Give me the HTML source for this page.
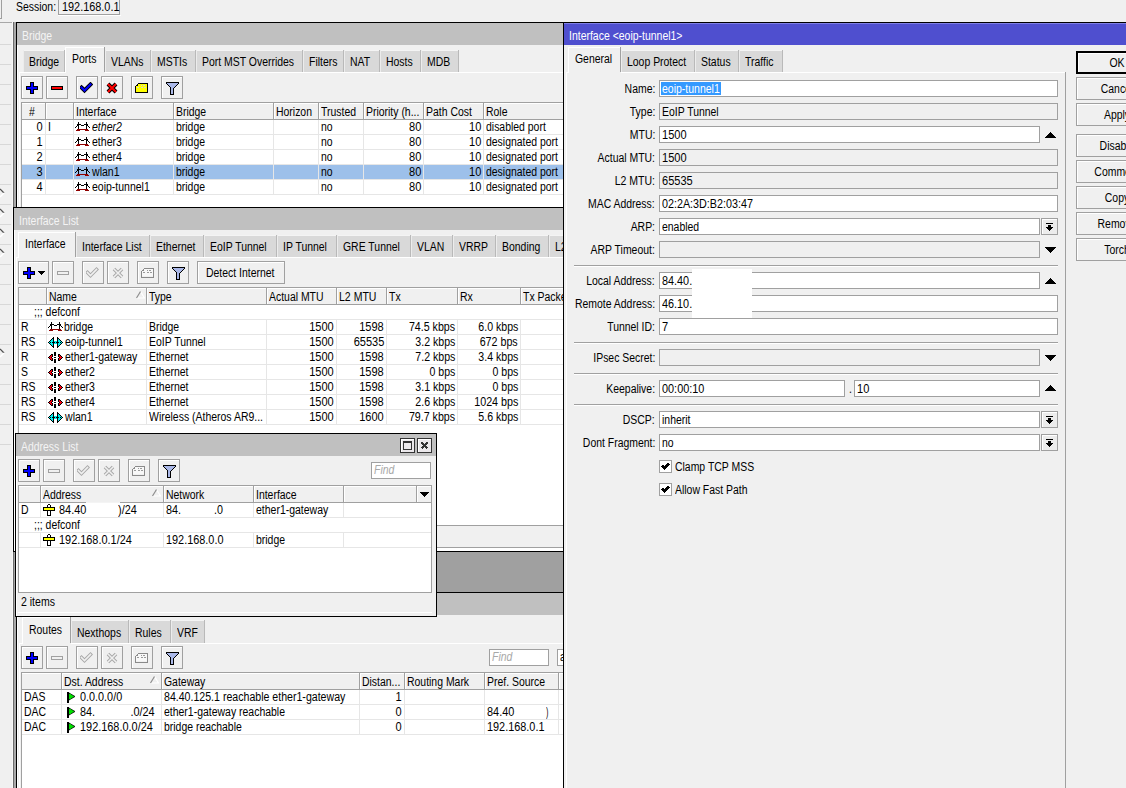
<!DOCTYPE html>
<html><head><meta charset="utf-8"><title>Winbox</title>
<style>
html,body{margin:0;padding:0;width:1126px;height:788px;overflow:hidden;background:#f0f0f0;position:relative}
.a{position:absolute;display:block}
.t{position:absolute;white-space:pre;font-family:"Liberation Sans",sans-serif;font-size:12px;line-height:14px;color:#000;transform-origin:0 0}
</style></head><body>
<div class="a" style="left:-5px;top:-5px;width:7px;height:24px;background:#f0f0f0;border:1px solid #a0a0a0;box-sizing:border-box;"></div>
<div class="t" style="top:0px;color:#000;transform:scaleX(0.87);left:16px;">Session:</div>
<div class="a" style="left:58px;top:-3px;width:62px;height:18px;background:#f0f0f0;border:1px solid #a0a0a0;box-sizing:border-box;"></div>
<div class="a" style="left:58px;top:15px;width:63px;height:1px;background:#ffffff;"></div>
<div class="t" style="top:0px;color:#000;transform:scaleX(0.9063636363636364);left:62px;">192.168.0.1</div>
<div class="a" style="left:0px;top:44px;width:11px;height:1px;background:#d8d8d8;"></div>
<div class="a" style="left:0px;top:64px;width:11px;height:1px;background:#d8d8d8;"></div>
<div class="a" style="left:0px;top:84px;width:11px;height:1px;background:#d8d8d8;"></div>
<div class="a" style="left:0px;top:104px;width:11px;height:1px;background:#d8d8d8;"></div>
<div class="a" style="left:0px;top:124px;width:11px;height:1px;background:#d8d8d8;"></div>
<div class="a" style="left:0px;top:144px;width:11px;height:1px;background:#d8d8d8;"></div>
<div class="a" style="left:0px;top:164px;width:11px;height:1px;background:#d8d8d8;"></div>
<div class="a" style="left:0px;top:184px;width:11px;height:1px;background:#d8d8d8;"></div>
<div class="a" style="left:0px;top:204px;width:11px;height:1px;background:#d8d8d8;"></div>
<div class="a" style="left:0px;top:224px;width:11px;height:1px;background:#d8d8d8;"></div>
<div class="a" style="left:0px;top:244px;width:11px;height:1px;background:#d8d8d8;"></div>
<div class="a" style="left:0px;top:264px;width:11px;height:1px;background:#d8d8d8;"></div>
<div class="a" style="left:0px;top:284px;width:11px;height:1px;background:#d8d8d8;"></div>
<div class="a" style="left:0px;top:304px;width:11px;height:1px;background:#d8d8d8;"></div>
<div class="a" style="left:0px;top:324px;width:11px;height:1px;background:#d8d8d8;"></div>
<div class="a" style="left:0px;top:344px;width:11px;height:1px;background:#d8d8d8;"></div>
<div class="a" style="left:0px;top:364px;width:11px;height:1px;background:#d8d8d8;"></div>
<div class="a" style="left:0px;top:384px;width:11px;height:1px;background:#d8d8d8;"></div>
<div class="a" style="left:0px;top:404px;width:11px;height:1px;background:#d8d8d8;"></div>
<div class="a" style="left:0px;top:424px;width:11px;height:1px;background:#d8d8d8;"></div>
<div class="a" style="left:0px;top:444px;width:11px;height:1px;background:#d8d8d8;"></div>
<div class="a" style="left:0px;top:22px;width:13px;height:1px;background:#a8a8a8;"></div>
<svg class="a" style="left:0px;top:188px" width="6" height="11" viewBox="0 0 6 11" shape-rendering="crispEdges"><path d="M0 1 L4 5" stroke="#505050" stroke-width="1.2" fill="none" shape-rendering="auto"/><path d="M4 5 L0 9" stroke="#ffffff" stroke-width="1.5" fill="none" shape-rendering="auto"/></svg>
<svg class="a" style="left:0px;top:208px" width="6" height="11" viewBox="0 0 6 11" shape-rendering="crispEdges"><path d="M0 1 L4 5" stroke="#505050" stroke-width="1.2" fill="none" shape-rendering="auto"/><path d="M4 5 L0 9" stroke="#ffffff" stroke-width="1.5" fill="none" shape-rendering="auto"/></svg>
<svg class="a" style="left:0px;top:228px" width="6" height="11" viewBox="0 0 6 11" shape-rendering="crispEdges"><path d="M0 1 L4 5" stroke="#505050" stroke-width="1.2" fill="none" shape-rendering="auto"/><path d="M4 5 L0 9" stroke="#ffffff" stroke-width="1.5" fill="none" shape-rendering="auto"/></svg>
<svg class="a" style="left:0px;top:248px" width="6" height="11" viewBox="0 0 6 11" shape-rendering="crispEdges"><path d="M0 1 L4 5" stroke="#505050" stroke-width="1.2" fill="none" shape-rendering="auto"/><path d="M4 5 L0 9" stroke="#ffffff" stroke-width="1.5" fill="none" shape-rendering="auto"/></svg>
<svg class="a" style="left:0px;top:348px" width="6" height="11" viewBox="0 0 6 11" shape-rendering="crispEdges"><path d="M0 1 L4 5" stroke="#505050" stroke-width="1.2" fill="none" shape-rendering="auto"/><path d="M4 5 L0 9" stroke="#ffffff" stroke-width="1.5" fill="none" shape-rendering="auto"/></svg>
<div class="a" style="left:13px;top:22px;width:1113px;height:766px;background:#a0a0a0;"></div>
<div class="a" style="left:12px;top:22px;width:1px;height:766px;background:#f8f8f8;"></div>
<div class="a" style="left:13px;top:22px;width:1px;height:766px;background:#6d6d6d;"></div>
<div class="a" style="left:14px;top:22px;width:2px;height:766px;background:#a9a9a9;"></div>
<div class="a" style="left:16px;top:22px;width:685px;height:186px;background:#f0f0f0;"></div>
<div class="a" style="left:16px;top:22px;width:685px;height:186px;border:1px solid #000000;box-sizing:border-box;"></div>
<div class="a" style="left:17px;top:23px;width:1px;height:184px;background:#ffffff;"></div>
<div class="a" style="left:17px;top:23px;width:684px;height:22px;background:#c0c0c0;"></div>
<div class="t" style="top:29px;color:#f4f4f4;transform:scaleX(0.87);left:22px;">Bridge</div>
<div class="a" style="left:19px;top:72px;width:545px;height:1px;background:#ffffff;"></div>
<div class="a" style="left:19px;top:72px;width:1px;height:135px;background:#ffffff;"></div>
<div class="a" style="left:23px;top:50px;width:42px;height:22px;background:#d9d9d9;"></div>
<div class="a" style="left:23px;top:50px;width:42px;height:1px;background:#f4f4f4;"></div>
<div class="a" style="left:23px;top:50px;width:1px;height:22px;background:#ececec;"></div>
<div class="a" style="left:64px;top:50px;width:1px;height:22px;background:#b9b9b9;"></div>
<div class="t" style="top:55px;color:#000;transform:scaleX(0.87);left:29px;">Bridge</div>
<div class="a" style="left:105px;top:50px;width:46px;height:22px;background:#d9d9d9;"></div>
<div class="a" style="left:105px;top:50px;width:46px;height:1px;background:#f4f4f4;"></div>
<div class="a" style="left:105px;top:50px;width:1px;height:22px;background:#ececec;"></div>
<div class="a" style="left:150px;top:50px;width:1px;height:22px;background:#b9b9b9;"></div>
<div class="t" style="top:55px;color:#000;transform:scaleX(0.87);left:111px;">VLANs</div>
<div class="a" style="left:151px;top:50px;width:45px;height:22px;background:#d9d9d9;"></div>
<div class="a" style="left:151px;top:50px;width:45px;height:1px;background:#f4f4f4;"></div>
<div class="a" style="left:151px;top:50px;width:1px;height:22px;background:#ececec;"></div>
<div class="a" style="left:195px;top:50px;width:1px;height:22px;background:#b9b9b9;"></div>
<div class="t" style="top:55px;color:#000;transform:scaleX(0.87);left:157px;">MSTIs</div>
<div class="a" style="left:196px;top:50px;width:107px;height:22px;background:#d9d9d9;"></div>
<div class="a" style="left:196px;top:50px;width:107px;height:1px;background:#f4f4f4;"></div>
<div class="a" style="left:196px;top:50px;width:1px;height:22px;background:#ececec;"></div>
<div class="a" style="left:302px;top:50px;width:1px;height:22px;background:#b9b9b9;"></div>
<div class="t" style="top:55px;color:#000;transform:scaleX(0.87);left:202px;">Port MST Overrides</div>
<div class="a" style="left:303px;top:50px;width:41px;height:22px;background:#d9d9d9;"></div>
<div class="a" style="left:303px;top:50px;width:41px;height:1px;background:#f4f4f4;"></div>
<div class="a" style="left:303px;top:50px;width:1px;height:22px;background:#ececec;"></div>
<div class="a" style="left:343px;top:50px;width:1px;height:22px;background:#b9b9b9;"></div>
<div class="t" style="top:55px;color:#000;transform:scaleX(0.87);left:309px;">Filters</div>
<div class="a" style="left:344px;top:50px;width:36px;height:22px;background:#d9d9d9;"></div>
<div class="a" style="left:344px;top:50px;width:36px;height:1px;background:#f4f4f4;"></div>
<div class="a" style="left:344px;top:50px;width:1px;height:22px;background:#ececec;"></div>
<div class="a" style="left:379px;top:50px;width:1px;height:22px;background:#b9b9b9;"></div>
<div class="t" style="top:55px;color:#000;transform:scaleX(0.87);left:350px;">NAT</div>
<div class="a" style="left:380px;top:50px;width:41px;height:22px;background:#d9d9d9;"></div>
<div class="a" style="left:380px;top:50px;width:41px;height:1px;background:#f4f4f4;"></div>
<div class="a" style="left:380px;top:50px;width:1px;height:22px;background:#ececec;"></div>
<div class="a" style="left:420px;top:50px;width:1px;height:22px;background:#b9b9b9;"></div>
<div class="t" style="top:55px;color:#000;transform:scaleX(0.87);left:386px;">Hosts</div>
<div class="a" style="left:421px;top:50px;width:38px;height:22px;background:#d9d9d9;"></div>
<div class="a" style="left:421px;top:50px;width:38px;height:1px;background:#f4f4f4;"></div>
<div class="a" style="left:421px;top:50px;width:1px;height:22px;background:#ececec;"></div>
<div class="a" style="left:458px;top:50px;width:1px;height:22px;background:#b9b9b9;"></div>
<div class="t" style="top:55px;color:#000;transform:scaleX(0.87);left:427px;">MDB</div>
<div class="a" style="left:65px;top:47px;width:40px;height:26px;background:#f0f0f0;"></div>
<div class="a" style="left:65px;top:47px;width:40px;height:1px;background:#ffffff;"></div>
<div class="a" style="left:65px;top:47px;width:1px;height:26px;background:#ffffff;"></div>
<div class="a" style="left:104px;top:47px;width:1px;height:25px;background:#a0a0a0;"></div>
<div class="t" style="top:52px;color:#000;transform:scaleX(0.87);left:72px;">Ports</div>
<div class="a" style="left:21px;top:76px;width:22px;height:23px;background:#f0f0f0;border:1px solid #a0a0a0;box-sizing:border-box;"></div>
<div class="a" style="left:22px;top:77px;width:20px;height:1px;background:#ffffff;"></div>
<div class="a" style="left:22px;top:77px;width:1px;height:21px;background:#ffffff;"></div>
<svg class="a" style="left:26px;top:82px" width="12" height="12" viewBox="0 0 12 12" shape-rendering="crispEdges"><rect x="4" y="0" width="4" height="12" fill="#000"/><rect x="0" y="4" width="12" height="4" fill="#000"/><rect x="5" y="1" width="2" height="10" fill="#0000ff"/><rect x="1" y="5" width="10" height="2" fill="#0000ff"/></svg>
<div class="a" style="left:46px;top:76px;width:22px;height:23px;background:#f0f0f0;border:1px solid #a0a0a0;box-sizing:border-box;"></div>
<div class="a" style="left:47px;top:77px;width:20px;height:1px;background:#ffffff;"></div>
<div class="a" style="left:47px;top:77px;width:1px;height:21px;background:#ffffff;"></div>
<svg class="a" style="left:51px;top:86px" width="12" height="4" viewBox="0 0 12 4" shape-rendering="crispEdges"><rect x="0" y="0" width="12" height="4" fill="#000"/><rect x="1" y="1" width="10" height="2" fill="#ff0000"/></svg>
<div class="a" style="left:76px;top:76px;width:22px;height:23px;background:#f0f0f0;border:1px solid #a0a0a0;box-sizing:border-box;"></div>
<div class="a" style="left:77px;top:77px;width:20px;height:1px;background:#ffffff;"></div>
<div class="a" style="left:77px;top:77px;width:1px;height:21px;background:#ffffff;"></div>
<svg class="a" style="left:80px;top:82px" width="13" height="12" viewBox="0 0 13 12"><path d="M1.5 5.5 L4.5 8.5 L10.5 2.5" stroke="#000" stroke-width="4" fill="none" stroke-linecap="square"/><path d="M1.5 5.5 L4.5 8.5 L10.5 2.5" stroke="#0000ff" stroke-width="2" fill="none" stroke-linecap="square"/></svg>
<div class="a" style="left:101px;top:76px;width:22px;height:23px;background:#f0f0f0;border:1px solid #a0a0a0;box-sizing:border-box;"></div>
<div class="a" style="left:102px;top:77px;width:20px;height:1px;background:#ffffff;"></div>
<div class="a" style="left:102px;top:77px;width:1px;height:21px;background:#ffffff;"></div>
<svg class="a" style="left:106px;top:82px" width="12" height="12" viewBox="0 0 12 12"><path d="M2 2 L10 10 M10 2 L2 10" stroke="#000" stroke-width="4" fill="none"/><path d="M2 2 L10 10 M10 2 L2 10" stroke="#ff0000" stroke-width="2" fill="none"/></svg>
<div class="a" style="left:131px;top:76px;width:22px;height:23px;background:#f0f0f0;border:1px solid #a0a0a0;box-sizing:border-box;"></div>
<div class="a" style="left:132px;top:77px;width:20px;height:1px;background:#ffffff;"></div>
<div class="a" style="left:132px;top:77px;width:1px;height:21px;background:#ffffff;"></div>
<svg class="a" style="left:135px;top:83px" width="13" height="10" viewBox="0 0 13 10" shape-rendering="crispEdges"><rect x="3" y="1" width="9" height="1" fill="#ffff00"/><rect x="2" y="2" width="10" height="1" fill="#ffff00"/><rect x="1" y="3" width="11" height="1" fill="#ffff00"/><rect x="1" y="4" width="11" height="1" fill="#ffff00"/><rect x="1" y="5" width="11" height="1" fill="#ffff00"/><rect x="1" y="6" width="11" height="1" fill="#ffff00"/><rect x="1" y="7" width="11" height="1" fill="#ffff00"/><rect x="1" y="8" width="11" height="1" fill="#ffff00"/><rect x="6" y="2" width="1" height="1" fill="#d8d8c8"/><rect x="8" y="2" width="2" height="1" fill="#d8d8c8"/><rect x="2" y="4" width="2" height="1" fill="#d8d8c8"/><rect x="6" y="4" width="2" height="1" fill="#d8d8c8"/><rect x="9" y="4" width="2" height="1" fill="#d8d8c8"/><rect x="3" y="0" width="10" height="1" fill="#000"/><rect x="2" y="1" width="1" height="1" fill="#000"/><rect x="12" y="1" width="1" height="1" fill="#000"/><rect x="1" y="2" width="1" height="1" fill="#000"/><rect x="12" y="2" width="1" height="1" fill="#000"/><rect x="0" y="3" width="1" height="1" fill="#000"/><rect x="12" y="3" width="1" height="1" fill="#000"/><rect x="0" y="4" width="1" height="1" fill="#000"/><rect x="12" y="4" width="1" height="1" fill="#000"/><rect x="0" y="5" width="1" height="1" fill="#000"/><rect x="12" y="5" width="1" height="1" fill="#000"/><rect x="0" y="6" width="1" height="1" fill="#000"/><rect x="12" y="6" width="1" height="1" fill="#000"/><rect x="0" y="7" width="1" height="1" fill="#000"/><rect x="12" y="7" width="1" height="1" fill="#000"/><rect x="0" y="8" width="1" height="1" fill="#000"/><rect x="12" y="8" width="1" height="1" fill="#000"/><rect x="0" y="9" width="13" height="1" fill="#000"/><rect x="2" y="2" width="1" height="1" fill="#000"/></svg>
<div class="a" style="left:161px;top:76px;width:22px;height:23px;background:#f0f0f0;border:1px solid #a0a0a0;box-sizing:border-box;"></div>
<div class="a" style="left:162px;top:77px;width:20px;height:1px;background:#ffffff;"></div>
<div class="a" style="left:162px;top:77px;width:1px;height:21px;background:#ffffff;"></div>
<svg class="a" style="left:166px;top:82px" width="13" height="13" viewBox="0 0 13 13" shape-rendering="crispEdges"><rect x="1" y="1" width="11" height="1" fill="#aab8e8"/><rect x="2" y="2" width="9" height="1" fill="#aab8e8"/><rect x="3" y="3" width="7" height="1" fill="#aab8e8"/><rect x="4" y="4" width="5" height="1" fill="#aab8e8"/><rect x="5" y="5" width="3" height="1" fill="#aab8e8"/><rect x="5" y="6" width="2" height="1" fill="#aab8e8"/><rect x="5" y="7" width="2" height="1" fill="#aab8e8"/><rect x="5" y="8" width="2" height="1" fill="#aab8e8"/><rect x="5" y="9" width="2" height="1" fill="#aab8e8"/><rect x="5" y="10" width="2" height="1" fill="#aab8e8"/><rect x="5" y="11" width="2" height="1" fill="#aab8e8"/><rect x="0" y="0" width="13" height="1" fill="#000"/><rect x="0" y="1" width="1" height="1" fill="#000"/><rect x="12" y="1" width="1" height="1" fill="#000"/><rect x="1" y="2" width="1" height="1" fill="#000"/><rect x="11" y="2" width="1" height="1" fill="#000"/><rect x="2" y="3" width="1" height="1" fill="#000"/><rect x="10" y="3" width="1" height="1" fill="#000"/><rect x="3" y="4" width="1" height="1" fill="#000"/><rect x="9" y="4" width="1" height="1" fill="#000"/><rect x="4" y="5" width="1" height="1" fill="#000"/><rect x="8" y="5" width="1" height="1" fill="#000"/><rect x="4" y="6" width="1" height="1" fill="#000"/><rect x="7" y="6" width="1" height="1" fill="#000"/><rect x="4" y="7" width="1" height="1" fill="#000"/><rect x="7" y="7" width="1" height="1" fill="#000"/><rect x="4" y="8" width="1" height="1" fill="#000"/><rect x="7" y="8" width="1" height="1" fill="#000"/><rect x="4" y="9" width="1" height="1" fill="#000"/><rect x="7" y="9" width="1" height="1" fill="#000"/><rect x="4" y="10" width="1" height="1" fill="#000"/><rect x="7" y="10" width="1" height="1" fill="#000"/><rect x="4" y="11" width="1" height="1" fill="#000"/><rect x="7" y="11" width="1" height="1" fill="#000"/><rect x="4" y="12" width="4" height="1" fill="#000"/></svg>
<div class="a" style="left:21px;top:102px;width:680px;height:129px;background:#ffffff;"></div>
<div class="a" style="left:21px;top:102px;width:680px;height:129px;border:1px solid #a0a0a0;box-sizing:border-box;"></div>
<div class="a" style="left:22px;top:103px;width:678px;height:16px;background:#f0f0f0;"></div>
<div class="a" style="left:22px;top:103px;width:678px;height:1px;background:#ffffff;"></div>
<div class="a" style="left:22px;top:119px;width:678px;height:1px;background:#a0a0a0;"></div>
<div class="a" style="left:45px;top:103px;width:1px;height:16px;background:#a0a0a0;"></div>
<div class="a" style="left:46px;top:103px;width:1px;height:16px;background:#ffffff;"></div>
<div class="a" style="left:73px;top:103px;width:1px;height:16px;background:#a0a0a0;"></div>
<div class="a" style="left:74px;top:103px;width:1px;height:16px;background:#ffffff;"></div>
<div class="a" style="left:173px;top:103px;width:1px;height:16px;background:#a0a0a0;"></div>
<div class="a" style="left:174px;top:103px;width:1px;height:16px;background:#ffffff;"></div>
<div class="a" style="left:273px;top:103px;width:1px;height:16px;background:#a0a0a0;"></div>
<div class="a" style="left:274px;top:103px;width:1px;height:16px;background:#ffffff;"></div>
<div class="a" style="left:318px;top:103px;width:1px;height:16px;background:#a0a0a0;"></div>
<div class="a" style="left:319px;top:103px;width:1px;height:16px;background:#ffffff;"></div>
<div class="a" style="left:363px;top:103px;width:1px;height:16px;background:#a0a0a0;"></div>
<div class="a" style="left:364px;top:103px;width:1px;height:16px;background:#ffffff;"></div>
<div class="a" style="left:423px;top:103px;width:1px;height:16px;background:#a0a0a0;"></div>
<div class="a" style="left:424px;top:103px;width:1px;height:16px;background:#ffffff;"></div>
<div class="a" style="left:483px;top:103px;width:1px;height:16px;background:#a0a0a0;"></div>
<div class="a" style="left:484px;top:103px;width:1px;height:16px;background:#ffffff;"></div>
<div class="t" style="top:105px;color:#000;transform:scaleX(0.87);left:29px;">#</div>
<div class="t" style="top:105px;color:#000;transform:scaleX(0.87);left:76px;">Interface</div>
<div class="t" style="top:105px;color:#000;transform:scaleX(0.87);left:176px;">Bridge</div>
<div class="t" style="top:105px;color:#000;transform:scaleX(0.87);left:276px;">Horizon</div>
<div class="t" style="top:105px;color:#000;transform:scaleX(0.87);left:321px;">Trusted</div>
<div class="t" style="top:105px;color:#000;transform:scaleX(0.87);left:366px;">Priority (h...</div>
<div class="t" style="top:105px;color:#000;transform:scaleX(0.87);left:426px;">Path Cost</div>
<div class="t" style="top:105px;color:#000;transform:scaleX(0.87);left:486px;">Role</div>
<div class="a" style="left:22px;top:165px;width:600px;height:14px;background:#9dc0ea;"></div>
<div class="a" style="left:22px;top:134px;width:679px;height:1px;background:#e6e6e6;"></div>
<div class="a" style="left:22px;top:149px;width:679px;height:1px;background:#e6e6e6;"></div>
<div class="a" style="left:22px;top:164px;width:679px;height:1px;background:#e6e6e6;"></div>
<div class="a" style="left:22px;top:179px;width:679px;height:1px;background:#e6e6e6;"></div>
<div class="a" style="left:22px;top:194px;width:679px;height:1px;background:#e6e6e6;"></div>
<div class="a" style="left:45px;top:120px;width:1px;height:75px;background:#e6e6e6;"></div>
<div class="a" style="left:73px;top:120px;width:1px;height:75px;background:#e6e6e6;"></div>
<div class="a" style="left:173px;top:120px;width:1px;height:75px;background:#e6e6e6;"></div>
<div class="a" style="left:273px;top:120px;width:1px;height:75px;background:#e6e6e6;"></div>
<div class="a" style="left:318px;top:120px;width:1px;height:75px;background:#e6e6e6;"></div>
<div class="a" style="left:363px;top:120px;width:1px;height:75px;background:#e6e6e6;"></div>
<div class="a" style="left:423px;top:120px;width:1px;height:75px;background:#e6e6e6;"></div>
<div class="a" style="left:483px;top:120px;width:1px;height:75px;background:#e6e6e6;"></div>
<div class="t" style="top:120px;color:#000;transform:scaleX(0.92);right:1083px;transform-origin:100% 0;">0</div>
<div class="t" style="top:120px;color:#000;transform:scaleX(0.87);left:48px;">I</div>
<svg class="a" style="left:75px;top:122px" width="15" height="9" viewBox="0 0 15 9" shape-rendering="crispEdges"><rect x="3" y="0" width="1" height="1" fill="#000"/><rect x="11" y="0" width="1" height="1" fill="#000"/><rect x="3" y="1" width="1" height="1" fill="#000"/><rect x="11" y="1" width="1" height="1" fill="#000"/><rect x="2" y="2" width="4" height="1" fill="#000"/><rect x="9" y="2" width="4" height="1" fill="#000"/><rect x="2" y="3" width="2" height="1" fill="#000"/><rect x="6" y="3" width="3" height="1" fill="#000"/><rect x="11" y="3" width="2" height="1" fill="#000"/><rect x="1" y="4" width="1" height="1" fill="#000"/><rect x="3" y="4" width="1" height="1" fill="#000"/><rect x="11" y="4" width="1" height="1" fill="#000"/><rect x="13" y="4" width="1" height="1" fill="#000"/><rect x="0" y="5" width="1" height="1" fill="#000"/><rect x="3" y="5" width="1" height="1" fill="#000"/><rect x="11" y="5" width="1" height="1" fill="#000"/><rect x="14" y="5" width="1" height="1" fill="#000"/><rect x="3" y="6" width="1" height="1" fill="#000"/><rect x="11" y="6" width="1" height="1" fill="#000"/><rect x="2" y="7" width="11" height="1" fill="#900000"/><rect x="1" y="8" width="4" height="1" fill="#900000"/><rect x="10" y="8" width="4" height="1" fill="#900000"/></svg>
<div class="t" style="top:120px;color:#000;transform:scaleX(0.8783333333333333);left:92px;font-style:italic">ether2</div>
<div class="t" style="top:120px;color:#000;transform:scaleX(0.87);left:176px;">bridge</div>
<div class="t" style="top:120px;color:#000;transform:scaleX(0.87);left:321px;">no</div>
<div class="t" style="top:120px;color:#000;transform:scaleX(0.92);right:705px;transform-origin:100% 0;">80</div>
<div class="t" style="top:120px;color:#000;transform:scaleX(0.92);right:645px;transform-origin:100% 0;">10</div>
<div class="t" style="top:120px;color:#000;transform:scaleX(0.87);left:486px;">disabled port</div>
<div class="t" style="top:135px;color:#000;transform:scaleX(0.92);right:1083px;transform-origin:100% 0;">1</div>
<svg class="a" style="left:75px;top:137px" width="15" height="9" viewBox="0 0 15 9" shape-rendering="crispEdges"><rect x="3" y="0" width="1" height="1" fill="#000"/><rect x="11" y="0" width="1" height="1" fill="#000"/><rect x="3" y="1" width="1" height="1" fill="#000"/><rect x="11" y="1" width="1" height="1" fill="#000"/><rect x="2" y="2" width="4" height="1" fill="#000"/><rect x="9" y="2" width="4" height="1" fill="#000"/><rect x="2" y="3" width="2" height="1" fill="#000"/><rect x="6" y="3" width="3" height="1" fill="#000"/><rect x="11" y="3" width="2" height="1" fill="#000"/><rect x="1" y="4" width="1" height="1" fill="#000"/><rect x="3" y="4" width="1" height="1" fill="#000"/><rect x="11" y="4" width="1" height="1" fill="#000"/><rect x="13" y="4" width="1" height="1" fill="#000"/><rect x="0" y="5" width="1" height="1" fill="#000"/><rect x="3" y="5" width="1" height="1" fill="#000"/><rect x="11" y="5" width="1" height="1" fill="#000"/><rect x="14" y="5" width="1" height="1" fill="#000"/><rect x="3" y="6" width="1" height="1" fill="#000"/><rect x="11" y="6" width="1" height="1" fill="#000"/><rect x="2" y="7" width="11" height="1" fill="#900000"/><rect x="1" y="8" width="4" height="1" fill="#900000"/><rect x="10" y="8" width="4" height="1" fill="#900000"/></svg>
<div class="t" style="top:135px;color:#000;transform:scaleX(0.8783333333333333);left:92px;">ether3</div>
<div class="t" style="top:135px;color:#000;transform:scaleX(0.87);left:176px;">bridge</div>
<div class="t" style="top:135px;color:#000;transform:scaleX(0.87);left:321px;">no</div>
<div class="t" style="top:135px;color:#000;transform:scaleX(0.92);right:705px;transform-origin:100% 0;">80</div>
<div class="t" style="top:135px;color:#000;transform:scaleX(0.92);right:645px;transform-origin:100% 0;">10</div>
<div class="t" style="top:135px;color:#000;transform:scaleX(0.87);left:486px;">designated port</div>
<div class="t" style="top:150px;color:#000;transform:scaleX(0.92);right:1083px;transform-origin:100% 0;">2</div>
<svg class="a" style="left:75px;top:152px" width="15" height="9" viewBox="0 0 15 9" shape-rendering="crispEdges"><rect x="3" y="0" width="1" height="1" fill="#000"/><rect x="11" y="0" width="1" height="1" fill="#000"/><rect x="3" y="1" width="1" height="1" fill="#000"/><rect x="11" y="1" width="1" height="1" fill="#000"/><rect x="2" y="2" width="4" height="1" fill="#000"/><rect x="9" y="2" width="4" height="1" fill="#000"/><rect x="2" y="3" width="2" height="1" fill="#000"/><rect x="6" y="3" width="3" height="1" fill="#000"/><rect x="11" y="3" width="2" height="1" fill="#000"/><rect x="1" y="4" width="1" height="1" fill="#000"/><rect x="3" y="4" width="1" height="1" fill="#000"/><rect x="11" y="4" width="1" height="1" fill="#000"/><rect x="13" y="4" width="1" height="1" fill="#000"/><rect x="0" y="5" width="1" height="1" fill="#000"/><rect x="3" y="5" width="1" height="1" fill="#000"/><rect x="11" y="5" width="1" height="1" fill="#000"/><rect x="14" y="5" width="1" height="1" fill="#000"/><rect x="3" y="6" width="1" height="1" fill="#000"/><rect x="11" y="6" width="1" height="1" fill="#000"/><rect x="2" y="7" width="11" height="1" fill="#900000"/><rect x="1" y="8" width="4" height="1" fill="#900000"/><rect x="10" y="8" width="4" height="1" fill="#900000"/></svg>
<div class="t" style="top:150px;color:#000;transform:scaleX(0.8783333333333333);left:92px;">ether4</div>
<div class="t" style="top:150px;color:#000;transform:scaleX(0.87);left:176px;">bridge</div>
<div class="t" style="top:150px;color:#000;transform:scaleX(0.87);left:321px;">no</div>
<div class="t" style="top:150px;color:#000;transform:scaleX(0.92);right:705px;transform-origin:100% 0;">80</div>
<div class="t" style="top:150px;color:#000;transform:scaleX(0.92);right:645px;transform-origin:100% 0;">10</div>
<div class="t" style="top:150px;color:#000;transform:scaleX(0.87);left:486px;">designated port</div>
<div class="t" style="top:165px;color:#000;transform:scaleX(0.92);right:1083px;transform-origin:100% 0;">3</div>
<svg class="a" style="left:75px;top:167px" width="15" height="9" viewBox="0 0 15 9" shape-rendering="crispEdges"><rect x="3" y="0" width="1" height="1" fill="#000"/><rect x="11" y="0" width="1" height="1" fill="#000"/><rect x="3" y="1" width="1" height="1" fill="#000"/><rect x="11" y="1" width="1" height="1" fill="#000"/><rect x="2" y="2" width="4" height="1" fill="#000"/><rect x="9" y="2" width="4" height="1" fill="#000"/><rect x="2" y="3" width="2" height="1" fill="#000"/><rect x="6" y="3" width="3" height="1" fill="#000"/><rect x="11" y="3" width="2" height="1" fill="#000"/><rect x="1" y="4" width="1" height="1" fill="#000"/><rect x="3" y="4" width="1" height="1" fill="#000"/><rect x="11" y="4" width="1" height="1" fill="#000"/><rect x="13" y="4" width="1" height="1" fill="#000"/><rect x="0" y="5" width="1" height="1" fill="#000"/><rect x="3" y="5" width="1" height="1" fill="#000"/><rect x="11" y="5" width="1" height="1" fill="#000"/><rect x="14" y="5" width="1" height="1" fill="#000"/><rect x="3" y="6" width="1" height="1" fill="#000"/><rect x="11" y="6" width="1" height="1" fill="#000"/><rect x="2" y="7" width="11" height="1" fill="#900000"/><rect x="1" y="8" width="4" height="1" fill="#900000"/><rect x="10" y="8" width="4" height="1" fill="#900000"/></svg>
<div class="t" style="top:165px;color:#000;transform:scaleX(0.88);left:92px;">wlan1</div>
<div class="t" style="top:165px;color:#000;transform:scaleX(0.87);left:176px;">bridge</div>
<div class="t" style="top:165px;color:#000;transform:scaleX(0.87);left:321px;">no</div>
<div class="t" style="top:165px;color:#000;transform:scaleX(0.92);right:705px;transform-origin:100% 0;">80</div>
<div class="t" style="top:165px;color:#000;transform:scaleX(0.92);right:645px;transform-origin:100% 0;">10</div>
<div class="t" style="top:165px;color:#000;transform:scaleX(0.87);left:486px;">designated port</div>
<div class="t" style="top:180px;color:#000;transform:scaleX(0.92);right:1083px;transform-origin:100% 0;">4</div>
<svg class="a" style="left:75px;top:182px" width="15" height="9" viewBox="0 0 15 9" shape-rendering="crispEdges"><rect x="3" y="0" width="1" height="1" fill="#000"/><rect x="11" y="0" width="1" height="1" fill="#000"/><rect x="3" y="1" width="1" height="1" fill="#000"/><rect x="11" y="1" width="1" height="1" fill="#000"/><rect x="2" y="2" width="4" height="1" fill="#000"/><rect x="9" y="2" width="4" height="1" fill="#000"/><rect x="2" y="3" width="2" height="1" fill="#000"/><rect x="6" y="3" width="3" height="1" fill="#000"/><rect x="11" y="3" width="2" height="1" fill="#000"/><rect x="1" y="4" width="1" height="1" fill="#000"/><rect x="3" y="4" width="1" height="1" fill="#000"/><rect x="11" y="4" width="1" height="1" fill="#000"/><rect x="13" y="4" width="1" height="1" fill="#000"/><rect x="0" y="5" width="1" height="1" fill="#000"/><rect x="3" y="5" width="1" height="1" fill="#000"/><rect x="11" y="5" width="1" height="1" fill="#000"/><rect x="14" y="5" width="1" height="1" fill="#000"/><rect x="3" y="6" width="1" height="1" fill="#000"/><rect x="11" y="6" width="1" height="1" fill="#000"/><rect x="2" y="7" width="11" height="1" fill="#900000"/><rect x="1" y="8" width="4" height="1" fill="#900000"/><rect x="10" y="8" width="4" height="1" fill="#900000"/></svg>
<div class="t" style="top:180px;color:#000;transform:scaleX(0.8741666666666666);left:92px;">eoip-tunnel1</div>
<div class="t" style="top:180px;color:#000;transform:scaleX(0.87);left:176px;">bridge</div>
<div class="t" style="top:180px;color:#000;transform:scaleX(0.87);left:321px;">no</div>
<div class="t" style="top:180px;color:#000;transform:scaleX(0.92);right:705px;transform-origin:100% 0;">80</div>
<div class="t" style="top:180px;color:#000;transform:scaleX(0.92);right:645px;transform-origin:100% 0;">10</div>
<div class="t" style="top:180px;color:#000;transform:scaleX(0.87);left:486px;">designated port</div>
<div class="a" style="left:13px;top:207px;width:688px;height:345px;background:#f0f0f0;"></div>
<div class="a" style="left:13px;top:207px;width:688px;height:345px;border:1px solid #000000;box-sizing:border-box;"></div>
<div class="a" style="left:14px;top:208px;width:1px;height:343px;background:#ffffff;"></div>
<div class="a" style="left:14px;top:208px;width:687px;height:22px;background:#c0c0c0;"></div>
<div class="t" style="top:214px;color:#f4f4f4;transform:scaleX(0.87);left:19px;">Interface List</div>
<div class="a" style="left:16px;top:257px;width:548px;height:1px;background:#ffffff;"></div>
<div class="a" style="left:16px;top:257px;width:1px;height:294px;background:#ffffff;"></div>
<div class="a" style="left:76px;top:235px;width:74px;height:22px;background:#d9d9d9;"></div>
<div class="a" style="left:76px;top:235px;width:74px;height:1px;background:#f4f4f4;"></div>
<div class="a" style="left:76px;top:235px;width:1px;height:22px;background:#ececec;"></div>
<div class="a" style="left:149px;top:235px;width:1px;height:22px;background:#b9b9b9;"></div>
<div class="t" style="top:240px;color:#000;transform:scaleX(0.87);left:82px;">Interface List</div>
<div class="a" style="left:150px;top:235px;width:54px;height:22px;background:#d9d9d9;"></div>
<div class="a" style="left:150px;top:235px;width:54px;height:1px;background:#f4f4f4;"></div>
<div class="a" style="left:150px;top:235px;width:1px;height:22px;background:#ececec;"></div>
<div class="a" style="left:203px;top:235px;width:1px;height:22px;background:#b9b9b9;"></div>
<div class="t" style="top:240px;color:#000;transform:scaleX(0.87);left:156px;">Ethernet</div>
<div class="a" style="left:204px;top:235px;width:73px;height:22px;background:#d9d9d9;"></div>
<div class="a" style="left:204px;top:235px;width:73px;height:1px;background:#f4f4f4;"></div>
<div class="a" style="left:204px;top:235px;width:1px;height:22px;background:#ececec;"></div>
<div class="a" style="left:276px;top:235px;width:1px;height:22px;background:#b9b9b9;"></div>
<div class="t" style="top:240px;color:#000;transform:scaleX(0.87);left:210px;">EoIP Tunnel</div>
<div class="a" style="left:277px;top:235px;width:60px;height:22px;background:#d9d9d9;"></div>
<div class="a" style="left:277px;top:235px;width:60px;height:1px;background:#f4f4f4;"></div>
<div class="a" style="left:277px;top:235px;width:1px;height:22px;background:#ececec;"></div>
<div class="a" style="left:336px;top:235px;width:1px;height:22px;background:#b9b9b9;"></div>
<div class="t" style="top:240px;color:#000;transform:scaleX(0.87);left:283px;">IP Tunnel</div>
<div class="a" style="left:337px;top:235px;width:74px;height:22px;background:#d9d9d9;"></div>
<div class="a" style="left:337px;top:235px;width:74px;height:1px;background:#f4f4f4;"></div>
<div class="a" style="left:337px;top:235px;width:1px;height:22px;background:#ececec;"></div>
<div class="a" style="left:410px;top:235px;width:1px;height:22px;background:#b9b9b9;"></div>
<div class="t" style="top:240px;color:#000;transform:scaleX(0.87);left:343px;">GRE Tunnel</div>
<div class="a" style="left:411px;top:235px;width:42px;height:22px;background:#d9d9d9;"></div>
<div class="a" style="left:411px;top:235px;width:42px;height:1px;background:#f4f4f4;"></div>
<div class="a" style="left:411px;top:235px;width:1px;height:22px;background:#ececec;"></div>
<div class="a" style="left:452px;top:235px;width:1px;height:22px;background:#b9b9b9;"></div>
<div class="t" style="top:240px;color:#000;transform:scaleX(0.87);left:417px;">VLAN</div>
<div class="a" style="left:453px;top:235px;width:43px;height:22px;background:#d9d9d9;"></div>
<div class="a" style="left:453px;top:235px;width:43px;height:1px;background:#f4f4f4;"></div>
<div class="a" style="left:453px;top:235px;width:1px;height:22px;background:#ececec;"></div>
<div class="a" style="left:495px;top:235px;width:1px;height:22px;background:#b9b9b9;"></div>
<div class="t" style="top:240px;color:#000;transform:scaleX(0.87);left:459px;">VRRP</div>
<div class="a" style="left:496px;top:235px;width:53px;height:22px;background:#d9d9d9;"></div>
<div class="a" style="left:496px;top:235px;width:53px;height:1px;background:#f4f4f4;"></div>
<div class="a" style="left:496px;top:235px;width:1px;height:22px;background:#ececec;"></div>
<div class="a" style="left:548px;top:235px;width:1px;height:22px;background:#b9b9b9;"></div>
<div class="t" style="top:240px;color:#000;transform:scaleX(0.87);left:502px;">Bonding</div>
<div class="a" style="left:549px;top:235px;width:62px;height:22px;background:#d9d9d9;"></div>
<div class="a" style="left:549px;top:235px;width:62px;height:1px;background:#f4f4f4;"></div>
<div class="a" style="left:549px;top:235px;width:1px;height:22px;background:#ececec;"></div>
<div class="a" style="left:610px;top:235px;width:1px;height:22px;background:#b9b9b9;"></div>
<div class="t" style="top:240px;color:#000;transform:scaleX(0.875);left:555px;">L2TP Ether</div>
<div class="a" style="left:18px;top:232px;width:58px;height:26px;background:#f0f0f0;"></div>
<div class="a" style="left:18px;top:232px;width:58px;height:1px;background:#ffffff;"></div>
<div class="a" style="left:18px;top:232px;width:1px;height:26px;background:#ffffff;"></div>
<div class="a" style="left:75px;top:232px;width:1px;height:25px;background:#a0a0a0;"></div>
<div class="t" style="top:237px;color:#000;transform:scaleX(0.87);left:25px;">Interface</div>
<div class="a" style="left:18px;top:261px;width:31px;height:23px;background:#f0f0f0;border:1px solid #a0a0a0;box-sizing:border-box;"></div>
<div class="a" style="left:19px;top:262px;width:29px;height:1px;background:#ffffff;"></div>
<div class="a" style="left:19px;top:262px;width:1px;height:21px;background:#ffffff;"></div>
<svg class="a" style="left:23px;top:267px" width="12" height="12" viewBox="0 0 12 12" shape-rendering="crispEdges"><rect x="4" y="0" width="4" height="12" fill="#000"/><rect x="0" y="4" width="12" height="4" fill="#000"/><rect x="5" y="1" width="2" height="10" fill="#0000ff"/><rect x="1" y="5" width="10" height="2" fill="#0000ff"/></svg>
<svg class="a" style="left:38px;top:271px" width="7" height="4" viewBox="0 0 7 4" shape-rendering="crispEdges"><path d="M0 0 H7 L3.5 4 Z" fill="#000"/></svg>
<div class="a" style="left:52px;top:261px;width:22px;height:23px;background:#f0f0f0;border:1px solid #a0a0a0;box-sizing:border-box;"></div>
<div class="a" style="left:53px;top:262px;width:20px;height:1px;background:#ffffff;"></div>
<div class="a" style="left:53px;top:262px;width:1px;height:21px;background:#ffffff;"></div>
<svg class="a" style="left:57px;top:271px" width="12" height="4" viewBox="0 0 12 4" shape-rendering="crispEdges"><rect x="0" y="0" width="12" height="4" fill="#a0a0a0"/><rect x="1" y="1" width="10" height="2" fill="#f0f0f0"/></svg>
<div class="a" style="left:82px;top:261px;width:22px;height:23px;background:#f0f0f0;border:1px solid #a0a0a0;box-sizing:border-box;"></div>
<div class="a" style="left:83px;top:262px;width:20px;height:1px;background:#ffffff;"></div>
<div class="a" style="left:83px;top:262px;width:1px;height:21px;background:#ffffff;"></div>
<svg class="a" style="left:86px;top:267px" width="13" height="12" viewBox="0 0 13 12"><path d="M1.5 5.5 L4.5 8.5 L10.5 2.5" stroke="#a8a8a8" stroke-width="3.5" fill="none" stroke-linecap="square"/><path d="M1.5 5.5 L4.5 8.5 L10.5 2.5" stroke="#f0f0f0" stroke-width="1.6" fill="none" stroke-linecap="square"/></svg>
<div class="a" style="left:107px;top:261px;width:22px;height:23px;background:#f0f0f0;border:1px solid #a0a0a0;box-sizing:border-box;"></div>
<div class="a" style="left:108px;top:262px;width:20px;height:1px;background:#ffffff;"></div>
<div class="a" style="left:108px;top:262px;width:1px;height:21px;background:#ffffff;"></div>
<svg class="a" style="left:112px;top:267px" width="12" height="12" viewBox="0 0 12 12"><path d="M2 2 L10 10 M10 2 L2 10" stroke="#a8a8a8" stroke-width="3.5" fill="none"/><path d="M2 2 L10 10 M10 2 L2 10" stroke="#f0f0f0" stroke-width="1.6" fill="none"/></svg>
<div class="a" style="left:137px;top:261px;width:22px;height:23px;background:#f0f0f0;border:1px solid #a0a0a0;box-sizing:border-box;"></div>
<div class="a" style="left:138px;top:262px;width:20px;height:1px;background:#ffffff;"></div>
<div class="a" style="left:138px;top:262px;width:1px;height:21px;background:#ffffff;"></div>
<svg class="a" style="left:141px;top:268px" width="13" height="10" viewBox="0 0 13 10" shape-rendering="crispEdges"><rect x="3" y="1" width="9" height="1" fill="#f8f8f8"/><rect x="2" y="2" width="10" height="1" fill="#f8f8f8"/><rect x="1" y="3" width="11" height="1" fill="#f8f8f8"/><rect x="1" y="4" width="11" height="1" fill="#f8f8f8"/><rect x="1" y="5" width="11" height="1" fill="#f8f8f8"/><rect x="1" y="6" width="11" height="1" fill="#f8f8f8"/><rect x="1" y="7" width="11" height="1" fill="#f8f8f8"/><rect x="1" y="8" width="11" height="1" fill="#f8f8f8"/><rect x="1" y="8" width="11" height="1" fill="#f0f0f0"/><rect x="6" y="2" width="1" height="1" fill="#9a9a9a"/><rect x="8" y="2" width="2" height="1" fill="#9a9a9a"/><rect x="2" y="4" width="2" height="1" fill="#9a9a9a"/><rect x="6" y="4" width="2" height="1" fill="#9a9a9a"/><rect x="9" y="4" width="2" height="1" fill="#9a9a9a"/><rect x="3" y="0" width="10" height="1" fill="#8a8a8a"/><rect x="2" y="1" width="1" height="1" fill="#8a8a8a"/><rect x="12" y="1" width="1" height="1" fill="#8a8a8a"/><rect x="1" y="2" width="1" height="1" fill="#8a8a8a"/><rect x="12" y="2" width="1" height="1" fill="#8a8a8a"/><rect x="0" y="3" width="1" height="1" fill="#8a8a8a"/><rect x="12" y="3" width="1" height="1" fill="#8a8a8a"/><rect x="0" y="4" width="1" height="1" fill="#8a8a8a"/><rect x="12" y="4" width="1" height="1" fill="#8a8a8a"/><rect x="0" y="5" width="1" height="1" fill="#8a8a8a"/><rect x="12" y="5" width="1" height="1" fill="#8a8a8a"/><rect x="0" y="6" width="1" height="1" fill="#8a8a8a"/><rect x="12" y="6" width="1" height="1" fill="#8a8a8a"/><rect x="0" y="7" width="1" height="1" fill="#8a8a8a"/><rect x="12" y="7" width="1" height="1" fill="#8a8a8a"/><rect x="0" y="8" width="1" height="1" fill="#8a8a8a"/><rect x="12" y="8" width="1" height="1" fill="#8a8a8a"/><rect x="0" y="9" width="13" height="1" fill="#8a8a8a"/><rect x="2" y="2" width="1" height="1" fill="#8a8a8a"/></svg>
<div class="a" style="left:167px;top:261px;width:22px;height:23px;background:#f0f0f0;border:1px solid #a0a0a0;box-sizing:border-box;"></div>
<div class="a" style="left:168px;top:262px;width:20px;height:1px;background:#ffffff;"></div>
<div class="a" style="left:168px;top:262px;width:1px;height:21px;background:#ffffff;"></div>
<svg class="a" style="left:172px;top:267px" width="13" height="13" viewBox="0 0 13 13" shape-rendering="crispEdges"><rect x="1" y="1" width="11" height="1" fill="#aab8e8"/><rect x="2" y="2" width="9" height="1" fill="#aab8e8"/><rect x="3" y="3" width="7" height="1" fill="#aab8e8"/><rect x="4" y="4" width="5" height="1" fill="#aab8e8"/><rect x="5" y="5" width="3" height="1" fill="#aab8e8"/><rect x="5" y="6" width="2" height="1" fill="#aab8e8"/><rect x="5" y="7" width="2" height="1" fill="#aab8e8"/><rect x="5" y="8" width="2" height="1" fill="#aab8e8"/><rect x="5" y="9" width="2" height="1" fill="#aab8e8"/><rect x="5" y="10" width="2" height="1" fill="#aab8e8"/><rect x="5" y="11" width="2" height="1" fill="#aab8e8"/><rect x="0" y="0" width="13" height="1" fill="#000"/><rect x="0" y="1" width="1" height="1" fill="#000"/><rect x="12" y="1" width="1" height="1" fill="#000"/><rect x="1" y="2" width="1" height="1" fill="#000"/><rect x="11" y="2" width="1" height="1" fill="#000"/><rect x="2" y="3" width="1" height="1" fill="#000"/><rect x="10" y="3" width="1" height="1" fill="#000"/><rect x="3" y="4" width="1" height="1" fill="#000"/><rect x="9" y="4" width="1" height="1" fill="#000"/><rect x="4" y="5" width="1" height="1" fill="#000"/><rect x="8" y="5" width="1" height="1" fill="#000"/><rect x="4" y="6" width="1" height="1" fill="#000"/><rect x="7" y="6" width="1" height="1" fill="#000"/><rect x="4" y="7" width="1" height="1" fill="#000"/><rect x="7" y="7" width="1" height="1" fill="#000"/><rect x="4" y="8" width="1" height="1" fill="#000"/><rect x="7" y="8" width="1" height="1" fill="#000"/><rect x="4" y="9" width="1" height="1" fill="#000"/><rect x="7" y="9" width="1" height="1" fill="#000"/><rect x="4" y="10" width="1" height="1" fill="#000"/><rect x="7" y="10" width="1" height="1" fill="#000"/><rect x="4" y="11" width="1" height="1" fill="#000"/><rect x="7" y="11" width="1" height="1" fill="#000"/><rect x="4" y="12" width="4" height="1" fill="#000"/></svg>
<div class="a" style="left:197px;top:261px;width:88px;height:23px;background:#f0f0f0;border:1px solid #a0a0a0;box-sizing:border-box;"></div>
<div class="a" style="left:198px;top:262px;width:86px;height:1px;background:#ffffff;"></div>
<div class="a" style="left:198px;top:262px;width:1px;height:21px;background:#ffffff;"></div>
<div class="t" style="top:266px;color:#000;transform:scaleX(0.87);left:206px;">Detect Internet</div>
<div class="a" style="left:18px;top:287px;width:683px;height:239px;background:#ffffff;"></div>
<div class="a" style="left:18px;top:287px;width:683px;height:239px;border:1px solid #a0a0a0;box-sizing:border-box;"></div>
<div class="a" style="left:19px;top:288px;width:681px;height:16px;background:#f0f0f0;"></div>
<div class="a" style="left:19px;top:288px;width:681px;height:1px;background:#ffffff;"></div>
<div class="a" style="left:19px;top:304px;width:681px;height:1px;background:#a0a0a0;"></div>
<div class="a" style="left:46px;top:288px;width:1px;height:16px;background:#a0a0a0;"></div>
<div class="a" style="left:47px;top:288px;width:1px;height:16px;background:#ffffff;"></div>
<div class="a" style="left:146px;top:288px;width:1px;height:16px;background:#a0a0a0;"></div>
<div class="a" style="left:147px;top:288px;width:1px;height:16px;background:#ffffff;"></div>
<div class="a" style="left:266px;top:288px;width:1px;height:16px;background:#a0a0a0;"></div>
<div class="a" style="left:267px;top:288px;width:1px;height:16px;background:#ffffff;"></div>
<div class="a" style="left:336px;top:288px;width:1px;height:16px;background:#a0a0a0;"></div>
<div class="a" style="left:337px;top:288px;width:1px;height:16px;background:#ffffff;"></div>
<div class="a" style="left:386px;top:288px;width:1px;height:16px;background:#a0a0a0;"></div>
<div class="a" style="left:387px;top:288px;width:1px;height:16px;background:#ffffff;"></div>
<div class="a" style="left:457px;top:288px;width:1px;height:16px;background:#a0a0a0;"></div>
<div class="a" style="left:458px;top:288px;width:1px;height:16px;background:#ffffff;"></div>
<div class="a" style="left:520px;top:288px;width:1px;height:16px;background:#a0a0a0;"></div>
<div class="a" style="left:521px;top:288px;width:1px;height:16px;background:#ffffff;"></div>
<div class="t" style="top:290px;color:#000;transform:scaleX(0.87);left:49px;">Name</div>
<div class="t" style="top:290px;color:#000;transform:scaleX(0.87);left:149px;">Type</div>
<div class="t" style="top:290px;color:#000;transform:scaleX(0.87);left:269px;">Actual MTU</div>
<div class="t" style="top:290px;color:#000;transform:scaleX(0.8783333333333333);left:339px;">L2 MTU</div>
<div class="t" style="top:290px;color:#000;transform:scaleX(0.87);left:389px;">Tx</div>
<div class="t" style="top:290px;color:#000;transform:scaleX(0.87);left:460px;">Rx</div>
<div class="t" style="top:290px;color:#000;transform:scaleX(0.8733333333333333);left:523px;">Tx Packet (p/s)</div>
<svg class="a" style="left:136px;top:291px" width="9" height="8" viewBox="0 0 9 8" shape-rendering="crispEdges"><path d="M4.5 0.5 L8.5 7 H0.5" fill="none" stroke="#ffffff" stroke-width="1.2" shape-rendering="auto"/><path d="M4.5 0.5 L0.5 7" fill="none" stroke="#8c8c8c" stroke-width="1.2" shape-rendering="auto"/></svg>
<div class="a" style="left:19px;top:319px;width:682px;height:1px;background:#e6e6e6;"></div>
<div class="t" style="top:305px;color:#000;transform:scaleX(0.87);left:34px;">;;; defconf</div>
<div class="a" style="left:19px;top:334px;width:682px;height:1px;background:#e6e6e6;"></div>
<div class="a" style="left:19px;top:349px;width:682px;height:1px;background:#e6e6e6;"></div>
<div class="a" style="left:19px;top:364px;width:682px;height:1px;background:#e6e6e6;"></div>
<div class="a" style="left:19px;top:379px;width:682px;height:1px;background:#e6e6e6;"></div>
<div class="a" style="left:19px;top:394px;width:682px;height:1px;background:#e6e6e6;"></div>
<div class="a" style="left:19px;top:409px;width:682px;height:1px;background:#e6e6e6;"></div>
<div class="a" style="left:19px;top:424px;width:682px;height:1px;background:#e6e6e6;"></div>
<div class="a" style="left:46px;top:320px;width:1px;height:105px;background:#e6e6e6;"></div>
<div class="a" style="left:146px;top:320px;width:1px;height:105px;background:#e6e6e6;"></div>
<div class="a" style="left:266px;top:320px;width:1px;height:105px;background:#e6e6e6;"></div>
<div class="a" style="left:336px;top:320px;width:1px;height:105px;background:#e6e6e6;"></div>
<div class="a" style="left:386px;top:320px;width:1px;height:105px;background:#e6e6e6;"></div>
<div class="a" style="left:457px;top:320px;width:1px;height:105px;background:#e6e6e6;"></div>
<div class="a" style="left:520px;top:320px;width:1px;height:105px;background:#e6e6e6;"></div>
<div class="t" style="top:320px;color:#000;transform:scaleX(0.87);left:21px;">R</div>
<svg class="a" style="left:48px;top:322px" width="15" height="9" viewBox="0 0 15 9" shape-rendering="crispEdges"><rect x="3" y="0" width="1" height="1" fill="#000"/><rect x="11" y="0" width="1" height="1" fill="#000"/><rect x="3" y="1" width="1" height="1" fill="#000"/><rect x="11" y="1" width="1" height="1" fill="#000"/><rect x="2" y="2" width="4" height="1" fill="#000"/><rect x="9" y="2" width="4" height="1" fill="#000"/><rect x="2" y="3" width="2" height="1" fill="#000"/><rect x="6" y="3" width="3" height="1" fill="#000"/><rect x="11" y="3" width="2" height="1" fill="#000"/><rect x="1" y="4" width="1" height="1" fill="#000"/><rect x="3" y="4" width="1" height="1" fill="#000"/><rect x="11" y="4" width="1" height="1" fill="#000"/><rect x="13" y="4" width="1" height="1" fill="#000"/><rect x="0" y="5" width="1" height="1" fill="#000"/><rect x="3" y="5" width="1" height="1" fill="#000"/><rect x="11" y="5" width="1" height="1" fill="#000"/><rect x="14" y="5" width="1" height="1" fill="#000"/><rect x="3" y="6" width="1" height="1" fill="#000"/><rect x="11" y="6" width="1" height="1" fill="#000"/><rect x="2" y="7" width="11" height="1" fill="#900000"/><rect x="1" y="8" width="4" height="1" fill="#900000"/><rect x="10" y="8" width="4" height="1" fill="#900000"/></svg>
<div class="t" style="top:320px;color:#000;transform:scaleX(0.87);left:64px;">bridge</div>
<div class="t" style="top:320px;color:#000;transform:scaleX(0.87);left:149px;">Bridge</div>
<div class="t" style="top:320px;color:#000;transform:scaleX(0.92);right:792px;transform-origin:100% 0;">1500</div>
<div class="t" style="top:320px;color:#000;transform:scaleX(0.92);right:742px;transform-origin:100% 0;">1598</div>
<div class="t" style="top:320px;color:#000;transform:scaleX(0.8866666666666667);right:671px;transform-origin:100% 0;">74.5 kbps</div>
<div class="t" style="top:320px;color:#000;transform:scaleX(0.8825);right:608px;transform-origin:100% 0;">6.0 kbps</div>
<div class="t" style="top:335px;color:#000;transform:scaleX(0.87);left:21px;">RS</div>
<svg class="a" style="left:48px;top:337px" width="15" height="11" viewBox="0 0 15 11" shape-rendering="crispEdges"><rect x="4" y="2" width="1" height="1" fill="#00f0f0"/><rect x="10" y="2" width="1" height="1" fill="#00f0f0"/><rect x="3" y="3" width="2" height="1" fill="#00f0f0"/><rect x="10" y="3" width="2" height="1" fill="#00f0f0"/><rect x="2" y="4" width="3" height="1" fill="#00f0f0"/><rect x="6" y="4" width="3" height="1" fill="#00f0f0"/><rect x="10" y="4" width="3" height="1" fill="#00f0f0"/><rect x="1" y="5" width="4" height="1" fill="#00f0f0"/><rect x="7" y="5" width="1" height="1" fill="#00f0f0"/><rect x="10" y="5" width="4" height="1" fill="#00f0f0"/><rect x="2" y="6" width="3" height="1" fill="#00f0f0"/><rect x="6" y="6" width="3" height="1" fill="#00f0f0"/><rect x="10" y="6" width="3" height="1" fill="#00f0f0"/><rect x="3" y="7" width="2" height="1" fill="#00f0f0"/><rect x="10" y="7" width="2" height="1" fill="#00f0f0"/><rect x="4" y="8" width="1" height="1" fill="#00f0f0"/><rect x="10" y="8" width="1" height="1" fill="#00f0f0"/><rect x="5" y="0" width="1" height="1" fill="#000"/><rect x="9" y="0" width="1" height="1" fill="#000"/><rect x="4" y="1" width="2" height="1" fill="#000"/><rect x="9" y="1" width="2" height="1" fill="#000"/><rect x="3" y="2" width="1" height="1" fill="#000"/><rect x="5" y="2" width="1" height="1" fill="#000"/><rect x="9" y="2" width="1" height="1" fill="#000"/><rect x="11" y="2" width="1" height="1" fill="#000"/><rect x="2" y="3" width="1" height="1" fill="#000"/><rect x="5" y="3" width="1" height="1" fill="#000"/><rect x="9" y="3" width="1" height="1" fill="#000"/><rect x="12" y="3" width="1" height="1" fill="#000"/><rect x="1" y="4" width="1" height="1" fill="#000"/><rect x="5" y="4" width="1" height="1" fill="#000"/><rect x="9" y="4" width="1" height="1" fill="#000"/><rect x="13" y="4" width="1" height="1" fill="#000"/><rect x="0" y="5" width="1" height="1" fill="#000"/><rect x="2" y="5" width="1" height="1" fill="#000"/><rect x="4" y="5" width="3" height="1" fill="#000"/><rect x="8" y="5" width="3" height="1" fill="#000"/><rect x="12" y="5" width="1" height="1" fill="#000"/><rect x="14" y="5" width="1" height="1" fill="#000"/><rect x="1" y="6" width="1" height="1" fill="#000"/><rect x="5" y="6" width="1" height="1" fill="#000"/><rect x="9" y="6" width="1" height="1" fill="#000"/><rect x="13" y="6" width="1" height="1" fill="#000"/><rect x="2" y="7" width="1" height="1" fill="#000"/><rect x="5" y="7" width="1" height="1" fill="#000"/><rect x="9" y="7" width="1" height="1" fill="#000"/><rect x="12" y="7" width="1" height="1" fill="#000"/><rect x="3" y="8" width="1" height="1" fill="#000"/><rect x="5" y="8" width="1" height="1" fill="#000"/><rect x="9" y="8" width="1" height="1" fill="#000"/><rect x="11" y="8" width="1" height="1" fill="#000"/><rect x="4" y="9" width="2" height="1" fill="#000"/><rect x="9" y="9" width="2" height="1" fill="#000"/><rect x="5" y="10" width="1" height="1" fill="#000"/><rect x="9" y="10" width="1" height="1" fill="#000"/></svg>
<div class="t" style="top:335px;color:#000;transform:scaleX(0.8741666666666666);left:65px;">eoip-tunnel1</div>
<div class="t" style="top:335px;color:#000;transform:scaleX(0.87);left:149px;">EoIP Tunnel</div>
<div class="t" style="top:335px;color:#000;transform:scaleX(0.92);right:792px;transform-origin:100% 0;">1500</div>
<div class="t" style="top:335px;color:#000;transform:scaleX(0.92);right:742px;transform-origin:100% 0;">65535</div>
<div class="t" style="top:335px;color:#000;transform:scaleX(0.8825);right:671px;transform-origin:100% 0;">3.2 kbps</div>
<div class="t" style="top:335px;color:#000;transform:scaleX(0.8914285714285715);right:608px;transform-origin:100% 0;">672 bps</div>
<div class="t" style="top:350px;color:#000;transform:scaleX(0.87);left:21px;">R</div>
<svg class="a" style="left:48px;top:352px" width="15" height="11" viewBox="0 0 15 11" shape-rendering="crispEdges"><rect x="6" y="0" width="2" height="1" fill="#000"/><rect x="6" y="1" width="2" height="1" fill="#000"/><rect x="3" y="2" width="2" height="1" fill="#000"/><rect x="6" y="2" width="2" height="1" fill="#000"/><rect x="10" y="2" width="2" height="1" fill="#000"/><rect x="2" y="3" width="1" height="1" fill="#000"/><rect x="4" y="3" width="1" height="1" fill="#000"/><rect x="6" y="3" width="2" height="1" fill="#000"/><rect x="10" y="3" width="1" height="1" fill="#000"/><rect x="12" y="3" width="1" height="1" fill="#000"/><rect x="1" y="4" width="1" height="1" fill="#000"/><rect x="4" y="4" width="1" height="1" fill="#000"/><rect x="10" y="4" width="1" height="1" fill="#000"/><rect x="13" y="4" width="1" height="1" fill="#000"/><rect x="0" y="5" width="1" height="1" fill="#000"/><rect x="3" y="5" width="1" height="1" fill="#000"/><rect x="6" y="5" width="2" height="1" fill="#000"/><rect x="11" y="5" width="1" height="1" fill="#000"/><rect x="14" y="5" width="1" height="1" fill="#000"/><rect x="1" y="6" width="1" height="1" fill="#000"/><rect x="4" y="6" width="1" height="1" fill="#000"/><rect x="10" y="6" width="1" height="1" fill="#000"/><rect x="13" y="6" width="1" height="1" fill="#000"/><rect x="2" y="7" width="1" height="1" fill="#000"/><rect x="4" y="7" width="1" height="1" fill="#000"/><rect x="6" y="7" width="2" height="1" fill="#000"/><rect x="10" y="7" width="1" height="1" fill="#000"/><rect x="12" y="7" width="1" height="1" fill="#000"/><rect x="3" y="8" width="2" height="1" fill="#000"/><rect x="6" y="8" width="2" height="1" fill="#000"/><rect x="10" y="8" width="2" height="1" fill="#000"/><rect x="6" y="9" width="2" height="1" fill="#000"/><rect x="6" y="10" width="2" height="1" fill="#000"/><rect x="3" y="3" width="1" height="1" fill="#ff0010"/><rect x="11" y="3" width="1" height="1" fill="#ff0010"/><rect x="2" y="4" width="2" height="1" fill="#ff0010"/><rect x="11" y="4" width="2" height="1" fill="#ff0010"/><rect x="1" y="5" width="2" height="1" fill="#ff0010"/><rect x="12" y="5" width="2" height="1" fill="#ff0010"/><rect x="2" y="6" width="2" height="1" fill="#ff0010"/><rect x="11" y="6" width="2" height="1" fill="#ff0010"/><rect x="3" y="7" width="1" height="1" fill="#ff0010"/><rect x="11" y="7" width="1" height="1" fill="#ff0010"/></svg>
<div class="t" style="top:350px;color:#000;transform:scaleX(0.8735714285714286);left:65px;">ether1-gateway</div>
<div class="t" style="top:350px;color:#000;transform:scaleX(0.87);left:149px;">Ethernet</div>
<div class="t" style="top:350px;color:#000;transform:scaleX(0.92);right:792px;transform-origin:100% 0;">1500</div>
<div class="t" style="top:350px;color:#000;transform:scaleX(0.92);right:742px;transform-origin:100% 0;">1598</div>
<div class="t" style="top:350px;color:#000;transform:scaleX(0.8825);right:671px;transform-origin:100% 0;">7.2 kbps</div>
<div class="t" style="top:350px;color:#000;transform:scaleX(0.8825);right:608px;transform-origin:100% 0;">3.4 kbps</div>
<div class="t" style="top:365px;color:#000;transform:scaleX(0.87);left:21px;">S</div>
<svg class="a" style="left:48px;top:367px" width="15" height="11" viewBox="0 0 15 11" shape-rendering="crispEdges"><rect x="6" y="0" width="2" height="1" fill="#000"/><rect x="6" y="1" width="2" height="1" fill="#000"/><rect x="3" y="2" width="2" height="1" fill="#000"/><rect x="6" y="2" width="2" height="1" fill="#000"/><rect x="10" y="2" width="2" height="1" fill="#000"/><rect x="2" y="3" width="1" height="1" fill="#000"/><rect x="4" y="3" width="1" height="1" fill="#000"/><rect x="6" y="3" width="2" height="1" fill="#000"/><rect x="10" y="3" width="1" height="1" fill="#000"/><rect x="12" y="3" width="1" height="1" fill="#000"/><rect x="1" y="4" width="1" height="1" fill="#000"/><rect x="4" y="4" width="1" height="1" fill="#000"/><rect x="10" y="4" width="1" height="1" fill="#000"/><rect x="13" y="4" width="1" height="1" fill="#000"/><rect x="0" y="5" width="1" height="1" fill="#000"/><rect x="3" y="5" width="1" height="1" fill="#000"/><rect x="6" y="5" width="2" height="1" fill="#000"/><rect x="11" y="5" width="1" height="1" fill="#000"/><rect x="14" y="5" width="1" height="1" fill="#000"/><rect x="1" y="6" width="1" height="1" fill="#000"/><rect x="4" y="6" width="1" height="1" fill="#000"/><rect x="10" y="6" width="1" height="1" fill="#000"/><rect x="13" y="6" width="1" height="1" fill="#000"/><rect x="2" y="7" width="1" height="1" fill="#000"/><rect x="4" y="7" width="1" height="1" fill="#000"/><rect x="6" y="7" width="2" height="1" fill="#000"/><rect x="10" y="7" width="1" height="1" fill="#000"/><rect x="12" y="7" width="1" height="1" fill="#000"/><rect x="3" y="8" width="2" height="1" fill="#000"/><rect x="6" y="8" width="2" height="1" fill="#000"/><rect x="10" y="8" width="2" height="1" fill="#000"/><rect x="6" y="9" width="2" height="1" fill="#000"/><rect x="6" y="10" width="2" height="1" fill="#000"/><rect x="3" y="3" width="1" height="1" fill="#ff0010"/><rect x="11" y="3" width="1" height="1" fill="#ff0010"/><rect x="2" y="4" width="2" height="1" fill="#ff0010"/><rect x="11" y="4" width="2" height="1" fill="#ff0010"/><rect x="1" y="5" width="2" height="1" fill="#ff0010"/><rect x="12" y="5" width="2" height="1" fill="#ff0010"/><rect x="2" y="6" width="2" height="1" fill="#ff0010"/><rect x="11" y="6" width="2" height="1" fill="#ff0010"/><rect x="3" y="7" width="1" height="1" fill="#ff0010"/><rect x="11" y="7" width="1" height="1" fill="#ff0010"/></svg>
<div class="t" style="top:365px;color:#000;transform:scaleX(0.8783333333333333);left:65px;">ether2</div>
<div class="t" style="top:365px;color:#000;transform:scaleX(0.87);left:149px;">Ethernet</div>
<div class="t" style="top:365px;color:#000;transform:scaleX(0.92);right:792px;transform-origin:100% 0;">1500</div>
<div class="t" style="top:365px;color:#000;transform:scaleX(0.92);right:742px;transform-origin:100% 0;">1598</div>
<div class="t" style="top:365px;color:#000;transform:scaleX(0.88);right:671px;transform-origin:100% 0;">0 bps</div>
<div class="t" style="top:365px;color:#000;transform:scaleX(0.88);right:608px;transform-origin:100% 0;">0 bps</div>
<div class="t" style="top:380px;color:#000;transform:scaleX(0.87);left:21px;">RS</div>
<svg class="a" style="left:48px;top:382px" width="15" height="11" viewBox="0 0 15 11" shape-rendering="crispEdges"><rect x="6" y="0" width="2" height="1" fill="#000"/><rect x="6" y="1" width="2" height="1" fill="#000"/><rect x="3" y="2" width="2" height="1" fill="#000"/><rect x="6" y="2" width="2" height="1" fill="#000"/><rect x="10" y="2" width="2" height="1" fill="#000"/><rect x="2" y="3" width="1" height="1" fill="#000"/><rect x="4" y="3" width="1" height="1" fill="#000"/><rect x="6" y="3" width="2" height="1" fill="#000"/><rect x="10" y="3" width="1" height="1" fill="#000"/><rect x="12" y="3" width="1" height="1" fill="#000"/><rect x="1" y="4" width="1" height="1" fill="#000"/><rect x="4" y="4" width="1" height="1" fill="#000"/><rect x="10" y="4" width="1" height="1" fill="#000"/><rect x="13" y="4" width="1" height="1" fill="#000"/><rect x="0" y="5" width="1" height="1" fill="#000"/><rect x="3" y="5" width="1" height="1" fill="#000"/><rect x="6" y="5" width="2" height="1" fill="#000"/><rect x="11" y="5" width="1" height="1" fill="#000"/><rect x="14" y="5" width="1" height="1" fill="#000"/><rect x="1" y="6" width="1" height="1" fill="#000"/><rect x="4" y="6" width="1" height="1" fill="#000"/><rect x="10" y="6" width="1" height="1" fill="#000"/><rect x="13" y="6" width="1" height="1" fill="#000"/><rect x="2" y="7" width="1" height="1" fill="#000"/><rect x="4" y="7" width="1" height="1" fill="#000"/><rect x="6" y="7" width="2" height="1" fill="#000"/><rect x="10" y="7" width="1" height="1" fill="#000"/><rect x="12" y="7" width="1" height="1" fill="#000"/><rect x="3" y="8" width="2" height="1" fill="#000"/><rect x="6" y="8" width="2" height="1" fill="#000"/><rect x="10" y="8" width="2" height="1" fill="#000"/><rect x="6" y="9" width="2" height="1" fill="#000"/><rect x="6" y="10" width="2" height="1" fill="#000"/><rect x="3" y="3" width="1" height="1" fill="#ff0010"/><rect x="11" y="3" width="1" height="1" fill="#ff0010"/><rect x="2" y="4" width="2" height="1" fill="#ff0010"/><rect x="11" y="4" width="2" height="1" fill="#ff0010"/><rect x="1" y="5" width="2" height="1" fill="#ff0010"/><rect x="12" y="5" width="2" height="1" fill="#ff0010"/><rect x="2" y="6" width="2" height="1" fill="#ff0010"/><rect x="11" y="6" width="2" height="1" fill="#ff0010"/><rect x="3" y="7" width="1" height="1" fill="#ff0010"/><rect x="11" y="7" width="1" height="1" fill="#ff0010"/></svg>
<div class="t" style="top:380px;color:#000;transform:scaleX(0.8783333333333333);left:65px;">ether3</div>
<div class="t" style="top:380px;color:#000;transform:scaleX(0.87);left:149px;">Ethernet</div>
<div class="t" style="top:380px;color:#000;transform:scaleX(0.92);right:792px;transform-origin:100% 0;">1500</div>
<div class="t" style="top:380px;color:#000;transform:scaleX(0.92);right:742px;transform-origin:100% 0;">1598</div>
<div class="t" style="top:380px;color:#000;transform:scaleX(0.8825);right:671px;transform-origin:100% 0;">3.1 kbps</div>
<div class="t" style="top:380px;color:#000;transform:scaleX(0.88);right:608px;transform-origin:100% 0;">0 bps</div>
<div class="t" style="top:395px;color:#000;transform:scaleX(0.87);left:21px;">RS</div>
<svg class="a" style="left:48px;top:397px" width="15" height="11" viewBox="0 0 15 11" shape-rendering="crispEdges"><rect x="6" y="0" width="2" height="1" fill="#000"/><rect x="6" y="1" width="2" height="1" fill="#000"/><rect x="3" y="2" width="2" height="1" fill="#000"/><rect x="6" y="2" width="2" height="1" fill="#000"/><rect x="10" y="2" width="2" height="1" fill="#000"/><rect x="2" y="3" width="1" height="1" fill="#000"/><rect x="4" y="3" width="1" height="1" fill="#000"/><rect x="6" y="3" width="2" height="1" fill="#000"/><rect x="10" y="3" width="1" height="1" fill="#000"/><rect x="12" y="3" width="1" height="1" fill="#000"/><rect x="1" y="4" width="1" height="1" fill="#000"/><rect x="4" y="4" width="1" height="1" fill="#000"/><rect x="10" y="4" width="1" height="1" fill="#000"/><rect x="13" y="4" width="1" height="1" fill="#000"/><rect x="0" y="5" width="1" height="1" fill="#000"/><rect x="3" y="5" width="1" height="1" fill="#000"/><rect x="6" y="5" width="2" height="1" fill="#000"/><rect x="11" y="5" width="1" height="1" fill="#000"/><rect x="14" y="5" width="1" height="1" fill="#000"/><rect x="1" y="6" width="1" height="1" fill="#000"/><rect x="4" y="6" width="1" height="1" fill="#000"/><rect x="10" y="6" width="1" height="1" fill="#000"/><rect x="13" y="6" width="1" height="1" fill="#000"/><rect x="2" y="7" width="1" height="1" fill="#000"/><rect x="4" y="7" width="1" height="1" fill="#000"/><rect x="6" y="7" width="2" height="1" fill="#000"/><rect x="10" y="7" width="1" height="1" fill="#000"/><rect x="12" y="7" width="1" height="1" fill="#000"/><rect x="3" y="8" width="2" height="1" fill="#000"/><rect x="6" y="8" width="2" height="1" fill="#000"/><rect x="10" y="8" width="2" height="1" fill="#000"/><rect x="6" y="9" width="2" height="1" fill="#000"/><rect x="6" y="10" width="2" height="1" fill="#000"/><rect x="3" y="3" width="1" height="1" fill="#ff0010"/><rect x="11" y="3" width="1" height="1" fill="#ff0010"/><rect x="2" y="4" width="2" height="1" fill="#ff0010"/><rect x="11" y="4" width="2" height="1" fill="#ff0010"/><rect x="1" y="5" width="2" height="1" fill="#ff0010"/><rect x="12" y="5" width="2" height="1" fill="#ff0010"/><rect x="2" y="6" width="2" height="1" fill="#ff0010"/><rect x="11" y="6" width="2" height="1" fill="#ff0010"/><rect x="3" y="7" width="1" height="1" fill="#ff0010"/><rect x="11" y="7" width="1" height="1" fill="#ff0010"/></svg>
<div class="t" style="top:395px;color:#000;transform:scaleX(0.8783333333333333);left:65px;">ether4</div>
<div class="t" style="top:395px;color:#000;transform:scaleX(0.87);left:149px;">Ethernet</div>
<div class="t" style="top:395px;color:#000;transform:scaleX(0.92);right:792px;transform-origin:100% 0;">1500</div>
<div class="t" style="top:395px;color:#000;transform:scaleX(0.92);right:742px;transform-origin:100% 0;">1598</div>
<div class="t" style="top:395px;color:#000;transform:scaleX(0.8825);right:671px;transform-origin:100% 0;">2.6 kbps</div>
<div class="t" style="top:395px;color:#000;transform:scaleX(0.895);right:608px;transform-origin:100% 0;">1024 bps</div>
<div class="t" style="top:410px;color:#000;transform:scaleX(0.87);left:21px;">RS</div>
<svg class="a" style="left:48px;top:412px" width="15" height="11" viewBox="0 0 15 11" shape-rendering="crispEdges"><rect x="4" y="2" width="1" height="1" fill="#00f0f0"/><rect x="10" y="2" width="1" height="1" fill="#00f0f0"/><rect x="3" y="3" width="2" height="1" fill="#00f0f0"/><rect x="10" y="3" width="2" height="1" fill="#00f0f0"/><rect x="2" y="4" width="3" height="1" fill="#00f0f0"/><rect x="6" y="4" width="3" height="1" fill="#00f0f0"/><rect x="10" y="4" width="3" height="1" fill="#00f0f0"/><rect x="1" y="5" width="4" height="1" fill="#00f0f0"/><rect x="7" y="5" width="1" height="1" fill="#00f0f0"/><rect x="10" y="5" width="4" height="1" fill="#00f0f0"/><rect x="2" y="6" width="3" height="1" fill="#00f0f0"/><rect x="6" y="6" width="3" height="1" fill="#00f0f0"/><rect x="10" y="6" width="3" height="1" fill="#00f0f0"/><rect x="3" y="7" width="2" height="1" fill="#00f0f0"/><rect x="10" y="7" width="2" height="1" fill="#00f0f0"/><rect x="4" y="8" width="1" height="1" fill="#00f0f0"/><rect x="10" y="8" width="1" height="1" fill="#00f0f0"/><rect x="5" y="0" width="1" height="1" fill="#000"/><rect x="9" y="0" width="1" height="1" fill="#000"/><rect x="4" y="1" width="2" height="1" fill="#000"/><rect x="9" y="1" width="2" height="1" fill="#000"/><rect x="3" y="2" width="1" height="1" fill="#000"/><rect x="5" y="2" width="1" height="1" fill="#000"/><rect x="9" y="2" width="1" height="1" fill="#000"/><rect x="11" y="2" width="1" height="1" fill="#000"/><rect x="2" y="3" width="1" height="1" fill="#000"/><rect x="5" y="3" width="1" height="1" fill="#000"/><rect x="9" y="3" width="1" height="1" fill="#000"/><rect x="12" y="3" width="1" height="1" fill="#000"/><rect x="1" y="4" width="1" height="1" fill="#000"/><rect x="5" y="4" width="1" height="1" fill="#000"/><rect x="9" y="4" width="1" height="1" fill="#000"/><rect x="13" y="4" width="1" height="1" fill="#000"/><rect x="0" y="5" width="1" height="1" fill="#000"/><rect x="2" y="5" width="1" height="1" fill="#000"/><rect x="4" y="5" width="3" height="1" fill="#000"/><rect x="8" y="5" width="3" height="1" fill="#000"/><rect x="12" y="5" width="1" height="1" fill="#000"/><rect x="14" y="5" width="1" height="1" fill="#000"/><rect x="1" y="6" width="1" height="1" fill="#000"/><rect x="5" y="6" width="1" height="1" fill="#000"/><rect x="9" y="6" width="1" height="1" fill="#000"/><rect x="13" y="6" width="1" height="1" fill="#000"/><rect x="2" y="7" width="1" height="1" fill="#000"/><rect x="5" y="7" width="1" height="1" fill="#000"/><rect x="9" y="7" width="1" height="1" fill="#000"/><rect x="12" y="7" width="1" height="1" fill="#000"/><rect x="3" y="8" width="1" height="1" fill="#000"/><rect x="5" y="8" width="1" height="1" fill="#000"/><rect x="9" y="8" width="1" height="1" fill="#000"/><rect x="11" y="8" width="1" height="1" fill="#000"/><rect x="4" y="9" width="2" height="1" fill="#000"/><rect x="9" y="9" width="2" height="1" fill="#000"/><rect x="5" y="10" width="1" height="1" fill="#000"/><rect x="9" y="10" width="1" height="1" fill="#000"/></svg>
<div class="t" style="top:410px;color:#000;transform:scaleX(0.88);left:65px;">wlan1</div>
<div class="t" style="top:410px;color:#000;transform:scaleX(0.8720833333333333);left:149px;">Wireless (Atheros AR9...</div>
<div class="t" style="top:410px;color:#000;transform:scaleX(0.92);right:792px;transform-origin:100% 0;">1500</div>
<div class="t" style="top:410px;color:#000;transform:scaleX(0.92);right:742px;transform-origin:100% 0;">1600</div>
<div class="t" style="top:410px;color:#000;transform:scaleX(0.8866666666666667);right:671px;transform-origin:100% 0;">79.7 kbps</div>
<div class="t" style="top:410px;color:#000;transform:scaleX(0.8825);right:608px;transform-origin:100% 0;">5.6 kbps</div>
<div class="a" style="left:18px;top:547px;width:683px;height:1px;background:#a0a0a0;"></div>
<div class="a" style="left:18px;top:548px;width:682px;height:3px;background:#ffffff;"></div>
<div class="a" style="left:16px;top:592px;width:685px;height:209px;background:#f0f0f0;"></div>
<div class="a" style="left:16px;top:592px;width:685px;height:209px;border:1px solid #000000;box-sizing:border-box;"></div>
<div class="a" style="left:17px;top:593px;width:1px;height:207px;background:#ffffff;"></div>
<div class="a" style="left:17px;top:593px;width:684px;height:22px;background:#c0c0c0;"></div>
<div class="t" style="top:599px;color:#f4f4f4;transform:scaleX(0.87);left:22px;">Route List</div>
<div class="a" style="left:19px;top:643px;width:545px;height:1px;background:#ffffff;"></div>
<div class="a" style="left:19px;top:643px;width:1px;height:145px;background:#ffffff;"></div>
<div class="a" style="left:71px;top:620px;width:58px;height:23px;background:#d9d9d9;"></div>
<div class="a" style="left:71px;top:620px;width:58px;height:1px;background:#f4f4f4;"></div>
<div class="a" style="left:71px;top:620px;width:1px;height:23px;background:#ececec;"></div>
<div class="a" style="left:128px;top:620px;width:1px;height:23px;background:#b9b9b9;"></div>
<div class="t" style="top:626px;color:#000;transform:scaleX(0.87);left:77px;">Nexthops</div>
<div class="a" style="left:129px;top:620px;width:42px;height:23px;background:#d9d9d9;"></div>
<div class="a" style="left:129px;top:620px;width:42px;height:1px;background:#f4f4f4;"></div>
<div class="a" style="left:129px;top:620px;width:1px;height:23px;background:#ececec;"></div>
<div class="a" style="left:170px;top:620px;width:1px;height:23px;background:#b9b9b9;"></div>
<div class="t" style="top:626px;color:#000;transform:scaleX(0.87);left:135px;">Rules</div>
<div class="a" style="left:171px;top:620px;width:34px;height:23px;background:#d9d9d9;"></div>
<div class="a" style="left:171px;top:620px;width:34px;height:1px;background:#f4f4f4;"></div>
<div class="a" style="left:171px;top:620px;width:1px;height:23px;background:#ececec;"></div>
<div class="a" style="left:204px;top:620px;width:1px;height:23px;background:#b9b9b9;"></div>
<div class="t" style="top:626px;color:#000;transform:scaleX(0.87);left:177px;">VRF</div>
<div class="a" style="left:22px;top:617px;width:49px;height:27px;background:#f0f0f0;"></div>
<div class="a" style="left:22px;top:617px;width:49px;height:1px;background:#ffffff;"></div>
<div class="a" style="left:22px;top:617px;width:1px;height:27px;background:#ffffff;"></div>
<div class="a" style="left:70px;top:617px;width:1px;height:26px;background:#a0a0a0;"></div>
<div class="t" style="top:623px;color:#000;transform:scaleX(0.87);left:29px;">Routes</div>
<div class="a" style="left:21px;top:646px;width:22px;height:23px;background:#f0f0f0;border:1px solid #a0a0a0;box-sizing:border-box;"></div>
<div class="a" style="left:22px;top:647px;width:20px;height:1px;background:#ffffff;"></div>
<div class="a" style="left:22px;top:647px;width:1px;height:21px;background:#ffffff;"></div>
<svg class="a" style="left:26px;top:652px" width="12" height="12" viewBox="0 0 12 12" shape-rendering="crispEdges"><rect x="4" y="0" width="4" height="12" fill="#000"/><rect x="0" y="4" width="12" height="4" fill="#000"/><rect x="5" y="1" width="2" height="10" fill="#0000ff"/><rect x="1" y="5" width="10" height="2" fill="#0000ff"/></svg>
<div class="a" style="left:46px;top:646px;width:22px;height:23px;background:#f0f0f0;border:1px solid #a0a0a0;box-sizing:border-box;"></div>
<div class="a" style="left:47px;top:647px;width:20px;height:1px;background:#ffffff;"></div>
<div class="a" style="left:47px;top:647px;width:1px;height:21px;background:#ffffff;"></div>
<svg class="a" style="left:51px;top:656px" width="12" height="4" viewBox="0 0 12 4" shape-rendering="crispEdges"><rect x="0" y="0" width="12" height="4" fill="#a0a0a0"/><rect x="1" y="1" width="10" height="2" fill="#f0f0f0"/></svg>
<div class="a" style="left:76px;top:646px;width:22px;height:23px;background:#f0f0f0;border:1px solid #a0a0a0;box-sizing:border-box;"></div>
<div class="a" style="left:77px;top:647px;width:20px;height:1px;background:#ffffff;"></div>
<div class="a" style="left:77px;top:647px;width:1px;height:21px;background:#ffffff;"></div>
<svg class="a" style="left:80px;top:652px" width="13" height="12" viewBox="0 0 13 12"><path d="M1.5 5.5 L4.5 8.5 L10.5 2.5" stroke="#a8a8a8" stroke-width="3.5" fill="none" stroke-linecap="square"/><path d="M1.5 5.5 L4.5 8.5 L10.5 2.5" stroke="#f0f0f0" stroke-width="1.6" fill="none" stroke-linecap="square"/></svg>
<div class="a" style="left:101px;top:646px;width:22px;height:23px;background:#f0f0f0;border:1px solid #a0a0a0;box-sizing:border-box;"></div>
<div class="a" style="left:102px;top:647px;width:20px;height:1px;background:#ffffff;"></div>
<div class="a" style="left:102px;top:647px;width:1px;height:21px;background:#ffffff;"></div>
<svg class="a" style="left:106px;top:652px" width="12" height="12" viewBox="0 0 12 12"><path d="M2 2 L10 10 M10 2 L2 10" stroke="#a8a8a8" stroke-width="3.5" fill="none"/><path d="M2 2 L10 10 M10 2 L2 10" stroke="#f0f0f0" stroke-width="1.6" fill="none"/></svg>
<div class="a" style="left:131px;top:646px;width:22px;height:23px;background:#f0f0f0;border:1px solid #a0a0a0;box-sizing:border-box;"></div>
<div class="a" style="left:132px;top:647px;width:20px;height:1px;background:#ffffff;"></div>
<div class="a" style="left:132px;top:647px;width:1px;height:21px;background:#ffffff;"></div>
<svg class="a" style="left:135px;top:653px" width="13" height="10" viewBox="0 0 13 10" shape-rendering="crispEdges"><rect x="3" y="1" width="9" height="1" fill="#f8f8f8"/><rect x="2" y="2" width="10" height="1" fill="#f8f8f8"/><rect x="1" y="3" width="11" height="1" fill="#f8f8f8"/><rect x="1" y="4" width="11" height="1" fill="#f8f8f8"/><rect x="1" y="5" width="11" height="1" fill="#f8f8f8"/><rect x="1" y="6" width="11" height="1" fill="#f8f8f8"/><rect x="1" y="7" width="11" height="1" fill="#f8f8f8"/><rect x="1" y="8" width="11" height="1" fill="#f8f8f8"/><rect x="1" y="8" width="11" height="1" fill="#f0f0f0"/><rect x="6" y="2" width="1" height="1" fill="#9a9a9a"/><rect x="8" y="2" width="2" height="1" fill="#9a9a9a"/><rect x="2" y="4" width="2" height="1" fill="#9a9a9a"/><rect x="6" y="4" width="2" height="1" fill="#9a9a9a"/><rect x="9" y="4" width="2" height="1" fill="#9a9a9a"/><rect x="3" y="0" width="10" height="1" fill="#8a8a8a"/><rect x="2" y="1" width="1" height="1" fill="#8a8a8a"/><rect x="12" y="1" width="1" height="1" fill="#8a8a8a"/><rect x="1" y="2" width="1" height="1" fill="#8a8a8a"/><rect x="12" y="2" width="1" height="1" fill="#8a8a8a"/><rect x="0" y="3" width="1" height="1" fill="#8a8a8a"/><rect x="12" y="3" width="1" height="1" fill="#8a8a8a"/><rect x="0" y="4" width="1" height="1" fill="#8a8a8a"/><rect x="12" y="4" width="1" height="1" fill="#8a8a8a"/><rect x="0" y="5" width="1" height="1" fill="#8a8a8a"/><rect x="12" y="5" width="1" height="1" fill="#8a8a8a"/><rect x="0" y="6" width="1" height="1" fill="#8a8a8a"/><rect x="12" y="6" width="1" height="1" fill="#8a8a8a"/><rect x="0" y="7" width="1" height="1" fill="#8a8a8a"/><rect x="12" y="7" width="1" height="1" fill="#8a8a8a"/><rect x="0" y="8" width="1" height="1" fill="#8a8a8a"/><rect x="12" y="8" width="1" height="1" fill="#8a8a8a"/><rect x="0" y="9" width="13" height="1" fill="#8a8a8a"/><rect x="2" y="2" width="1" height="1" fill="#8a8a8a"/></svg>
<div class="a" style="left:161px;top:646px;width:22px;height:23px;background:#f0f0f0;border:1px solid #a0a0a0;box-sizing:border-box;"></div>
<div class="a" style="left:162px;top:647px;width:20px;height:1px;background:#ffffff;"></div>
<div class="a" style="left:162px;top:647px;width:1px;height:21px;background:#ffffff;"></div>
<svg class="a" style="left:166px;top:652px" width="13" height="13" viewBox="0 0 13 13" shape-rendering="crispEdges"><rect x="1" y="1" width="11" height="1" fill="#aab8e8"/><rect x="2" y="2" width="9" height="1" fill="#aab8e8"/><rect x="3" y="3" width="7" height="1" fill="#aab8e8"/><rect x="4" y="4" width="5" height="1" fill="#aab8e8"/><rect x="5" y="5" width="3" height="1" fill="#aab8e8"/><rect x="5" y="6" width="2" height="1" fill="#aab8e8"/><rect x="5" y="7" width="2" height="1" fill="#aab8e8"/><rect x="5" y="8" width="2" height="1" fill="#aab8e8"/><rect x="5" y="9" width="2" height="1" fill="#aab8e8"/><rect x="5" y="10" width="2" height="1" fill="#aab8e8"/><rect x="5" y="11" width="2" height="1" fill="#aab8e8"/><rect x="0" y="0" width="13" height="1" fill="#000"/><rect x="0" y="1" width="1" height="1" fill="#000"/><rect x="12" y="1" width="1" height="1" fill="#000"/><rect x="1" y="2" width="1" height="1" fill="#000"/><rect x="11" y="2" width="1" height="1" fill="#000"/><rect x="2" y="3" width="1" height="1" fill="#000"/><rect x="10" y="3" width="1" height="1" fill="#000"/><rect x="3" y="4" width="1" height="1" fill="#000"/><rect x="9" y="4" width="1" height="1" fill="#000"/><rect x="4" y="5" width="1" height="1" fill="#000"/><rect x="8" y="5" width="1" height="1" fill="#000"/><rect x="4" y="6" width="1" height="1" fill="#000"/><rect x="7" y="6" width="1" height="1" fill="#000"/><rect x="4" y="7" width="1" height="1" fill="#000"/><rect x="7" y="7" width="1" height="1" fill="#000"/><rect x="4" y="8" width="1" height="1" fill="#000"/><rect x="7" y="8" width="1" height="1" fill="#000"/><rect x="4" y="9" width="1" height="1" fill="#000"/><rect x="7" y="9" width="1" height="1" fill="#000"/><rect x="4" y="10" width="1" height="1" fill="#000"/><rect x="7" y="10" width="1" height="1" fill="#000"/><rect x="4" y="11" width="1" height="1" fill="#000"/><rect x="7" y="11" width="1" height="1" fill="#000"/><rect x="4" y="12" width="4" height="1" fill="#000"/></svg>
<div class="a" style="left:489px;top:649px;width:60px;height:17px;background:#ffffff;border:1px solid #a0a0a0;box-sizing:border-box;"></div>
<div class="t" style="top:650px;color:#a8a8a8;transform:scaleX(0.87);left:492px;font-style:italic">Find</div>
<div class="a" style="left:557px;top:649px;width:84px;height:17px;background:#ffffff;border:1px solid #a0a0a0;box-sizing:border-box;"></div>
<div class="t" style="top:650px;color:#000;transform:scaleX(0.87);left:560px;">all</div>
<div class="a" style="left:21px;top:672px;width:680px;height:129px;background:#ffffff;"></div>
<div class="a" style="left:21px;top:672px;width:680px;height:129px;border:1px solid #a0a0a0;box-sizing:border-box;"></div>
<div class="a" style="left:22px;top:673px;width:678px;height:16px;background:#f0f0f0;"></div>
<div class="a" style="left:22px;top:673px;width:678px;height:1px;background:#ffffff;"></div>
<div class="a" style="left:22px;top:689px;width:678px;height:1px;background:#a0a0a0;"></div>
<div class="a" style="left:61px;top:673px;width:1px;height:16px;background:#a0a0a0;"></div>
<div class="a" style="left:62px;top:673px;width:1px;height:16px;background:#ffffff;"></div>
<div class="a" style="left:161px;top:673px;width:1px;height:16px;background:#a0a0a0;"></div>
<div class="a" style="left:162px;top:673px;width:1px;height:16px;background:#ffffff;"></div>
<div class="a" style="left:359px;top:673px;width:1px;height:16px;background:#a0a0a0;"></div>
<div class="a" style="left:360px;top:673px;width:1px;height:16px;background:#ffffff;"></div>
<div class="a" style="left:404px;top:673px;width:1px;height:16px;background:#a0a0a0;"></div>
<div class="a" style="left:405px;top:673px;width:1px;height:16px;background:#ffffff;"></div>
<div class="a" style="left:484px;top:673px;width:1px;height:16px;background:#a0a0a0;"></div>
<div class="a" style="left:485px;top:673px;width:1px;height:16px;background:#ffffff;"></div>
<div class="a" style="left:558px;top:673px;width:1px;height:16px;background:#a0a0a0;"></div>
<div class="a" style="left:559px;top:673px;width:1px;height:16px;background:#ffffff;"></div>
<div class="t" style="top:675px;color:#000;transform:scaleX(0.87);left:64px;">Dst. Address</div>
<div class="t" style="top:675px;color:#000;transform:scaleX(0.87);left:164px;">Gateway</div>
<div class="t" style="top:675px;color:#000;transform:scaleX(0.87);left:362px;">Distan...</div>
<div class="t" style="top:675px;color:#000;transform:scaleX(0.87);left:407px;">Routing Mark</div>
<div class="t" style="top:675px;color:#000;transform:scaleX(0.87);left:487px;">Pref. Source</div>
<svg class="a" style="left:150px;top:676px" width="9" height="8" viewBox="0 0 9 8" shape-rendering="crispEdges"><path d="M4.5 0.5 L8.5 7 H0.5" fill="none" stroke="#ffffff" stroke-width="1.2" shape-rendering="auto"/><path d="M4.5 0.5 L0.5 7" fill="none" stroke="#8c8c8c" stroke-width="1.2" shape-rendering="auto"/></svg>
<div class="a" style="left:22px;top:704px;width:679px;height:1px;background:#e6e6e6;"></div>
<div class="a" style="left:22px;top:719px;width:679px;height:1px;background:#e6e6e6;"></div>
<div class="a" style="left:22px;top:734px;width:679px;height:1px;background:#e6e6e6;"></div>
<div class="a" style="left:61px;top:690px;width:1px;height:45px;background:#e6e6e6;"></div>
<div class="a" style="left:161px;top:690px;width:1px;height:45px;background:#e6e6e6;"></div>
<div class="a" style="left:359px;top:690px;width:1px;height:45px;background:#e6e6e6;"></div>
<div class="a" style="left:404px;top:690px;width:1px;height:45px;background:#e6e6e6;"></div>
<div class="a" style="left:484px;top:690px;width:1px;height:45px;background:#e6e6e6;"></div>
<div class="a" style="left:558px;top:690px;width:1px;height:45px;background:#e6e6e6;"></div>
<div class="t" style="top:690px;color:#000;transform:scaleX(0.87);left:24px;">DAS</div>
<svg class="a" style="left:67px;top:692px" width="10" height="11" viewBox="0 0 10 11" shape-rendering="crispEdges"><rect x="0" y="0" width="2" height="11" fill="#000"/><path d="M2 1 L8 4.5 L2 8 Z" fill="#00e000" stroke="#000" stroke-width="0.8" shape-rendering="auto"/><rect x="2" y="2" width="2" height="5" fill="#00e000"/></svg>
<div class="t" style="top:690px;color:#000;transform:scaleX(0.9033333333333333);left:80px;">0.0.0.0/0</div>
<div class="t" style="top:690px;color:#000;transform:scaleX(0.8825);left:164px;">84.40.125.1 reachable ether1-gateway</div>
<div class="t" style="top:690px;color:#000;transform:scaleX(0.92);right:724px;transform-origin:100% 0;">1</div>
<div class="t" style="top:690px;color:#000;transform:scaleX(0.87);left:487px;"></div>
<div class="t" style="top:705px;color:#000;transform:scaleX(0.87);left:24px;">DAC</div>
<svg class="a" style="left:67px;top:707px" width="10" height="11" viewBox="0 0 10 11" shape-rendering="crispEdges"><rect x="0" y="0" width="2" height="11" fill="#000"/><path d="M2 1 L8 4.5 L2 8 Z" fill="#00e000" stroke="#000" stroke-width="0.8" shape-rendering="auto"/><rect x="2" y="2" width="2" height="5" fill="#00e000"/></svg>
<div class="t" style="top:705px;color:#000;transform:scaleX(0.9033333333333333);left:80px;">84.</div>
<div class="t" style="top:705px;color:#000;transform:scaleX(0.8720833333333333);left:164px;">ether1-gateway reachable</div>
<div class="t" style="top:705px;color:#000;transform:scaleX(0.92);right:724px;transform-origin:100% 0;">0</div>
<div class="t" style="top:705px;color:#000;transform:scaleX(0.91);left:487px;">84.40</div>
<div class="t" style="top:720px;color:#000;transform:scaleX(0.87);left:24px;">DAC</div>
<svg class="a" style="left:67px;top:722px" width="10" height="11" viewBox="0 0 10 11" shape-rendering="crispEdges"><rect x="0" y="0" width="2" height="11" fill="#000"/><path d="M2 1 L8 4.5 L2 8 Z" fill="#00e000" stroke="#000" stroke-width="0.8" shape-rendering="auto"/><rect x="2" y="2" width="2" height="5" fill="#00e000"/></svg>
<div class="t" style="top:720px;color:#000;transform:scaleX(0.9092857142857143);left:80px;">192.168.0.0/24</div>
<div class="t" style="top:720px;color:#000;transform:scaleX(0.87);left:164px;">bridge reachable</div>
<div class="t" style="top:720px;color:#000;transform:scaleX(0.92);right:724px;transform-origin:100% 0;">0</div>
<div class="t" style="top:720px;color:#000;transform:scaleX(0.9063636363636364);left:487px;">192.168.0.1</div>
<div class="t" style="top:705px;color:#000;transform:scaleX(0.91);right:971px;transform-origin:100% 0;">.0/24</div>
<div class="t" style="top:705px;color:#000;transform:scaleX(0.6);left:546px;">)</div>
<div class="a" style="left:15px;top:433px;width:422px;height:184px;background:#f0f0f0;"></div>
<div class="a" style="left:15px;top:433px;width:422px;height:184px;border:1px solid #000000;box-sizing:border-box;"></div>
<div class="a" style="left:16px;top:434px;width:1px;height:182px;background:#ffffff;"></div>
<div class="a" style="left:16px;top:434px;width:420px;height:22px;background:#c0c0c0;"></div>
<div class="t" style="top:440px;color:#f4f4f4;transform:scaleX(0.87);left:21px;">Address List</div>
<div class="a" style="left:400px;top:438px;width:15px;height:15px;background:#ebe8eb;border:1px solid #333333;box-sizing:border-box;"></div>
<div class="a" style="left:401px;top:439px;width:13px;height:1px;background:#ffffff;"></div>
<div class="a" style="left:401px;top:439px;width:1px;height:13px;background:#ffffff;"></div>
<div class="a" style="left:417px;top:438px;width:15px;height:15px;background:#ebe8eb;border:1px solid #333333;box-sizing:border-box;"></div>
<div class="a" style="left:418px;top:439px;width:13px;height:1px;background:#ffffff;"></div>
<div class="a" style="left:418px;top:439px;width:1px;height:13px;background:#ffffff;"></div>
<div class="a" style="left:403px;top:441px;width:9px;height:9px;border:1px solid #333333;box-sizing:border-box;"></div>
<div class="a" style="left:403px;top:442px;width:9px;height:1px;background:#333333;"></div>
<svg class="a" style="left:420px;top:441px" width="9" height="9" viewBox="0 0 9 9" shape-rendering="crispEdges"><path d="M1.5 1.5 L7.5 7.5 M7.5 1.5 L1.5 7.5" stroke="#333" stroke-width="1.8" fill="none"/></svg>
<div class="a" style="left:18px;top:459px;width:22px;height:23px;background:#f0f0f0;border:1px solid #a0a0a0;box-sizing:border-box;"></div>
<div class="a" style="left:19px;top:460px;width:20px;height:1px;background:#ffffff;"></div>
<div class="a" style="left:19px;top:460px;width:1px;height:21px;background:#ffffff;"></div>
<svg class="a" style="left:23px;top:465px" width="12" height="12" viewBox="0 0 12 12" shape-rendering="crispEdges"><rect x="4" y="0" width="4" height="12" fill="#000"/><rect x="0" y="4" width="12" height="4" fill="#000"/><rect x="5" y="1" width="2" height="10" fill="#0000ff"/><rect x="1" y="5" width="10" height="2" fill="#0000ff"/></svg>
<div class="a" style="left:43px;top:459px;width:22px;height:23px;background:#f0f0f0;border:1px solid #a0a0a0;box-sizing:border-box;"></div>
<div class="a" style="left:44px;top:460px;width:20px;height:1px;background:#ffffff;"></div>
<div class="a" style="left:44px;top:460px;width:1px;height:21px;background:#ffffff;"></div>
<svg class="a" style="left:48px;top:469px" width="12" height="4" viewBox="0 0 12 4" shape-rendering="crispEdges"><rect x="0" y="0" width="12" height="4" fill="#a0a0a0"/><rect x="1" y="1" width="10" height="2" fill="#f0f0f0"/></svg>
<div class="a" style="left:73px;top:459px;width:22px;height:23px;background:#f0f0f0;border:1px solid #a0a0a0;box-sizing:border-box;"></div>
<div class="a" style="left:74px;top:460px;width:20px;height:1px;background:#ffffff;"></div>
<div class="a" style="left:74px;top:460px;width:1px;height:21px;background:#ffffff;"></div>
<svg class="a" style="left:77px;top:465px" width="13" height="12" viewBox="0 0 13 12"><path d="M1.5 5.5 L4.5 8.5 L10.5 2.5" stroke="#a8a8a8" stroke-width="3.5" fill="none" stroke-linecap="square"/><path d="M1.5 5.5 L4.5 8.5 L10.5 2.5" stroke="#f0f0f0" stroke-width="1.6" fill="none" stroke-linecap="square"/></svg>
<div class="a" style="left:98px;top:459px;width:22px;height:23px;background:#f0f0f0;border:1px solid #a0a0a0;box-sizing:border-box;"></div>
<div class="a" style="left:99px;top:460px;width:20px;height:1px;background:#ffffff;"></div>
<div class="a" style="left:99px;top:460px;width:1px;height:21px;background:#ffffff;"></div>
<svg class="a" style="left:103px;top:465px" width="12" height="12" viewBox="0 0 12 12"><path d="M2 2 L10 10 M10 2 L2 10" stroke="#a8a8a8" stroke-width="3.5" fill="none"/><path d="M2 2 L10 10 M10 2 L2 10" stroke="#f0f0f0" stroke-width="1.6" fill="none"/></svg>
<div class="a" style="left:128px;top:459px;width:22px;height:23px;background:#f0f0f0;border:1px solid #a0a0a0;box-sizing:border-box;"></div>
<div class="a" style="left:129px;top:460px;width:20px;height:1px;background:#ffffff;"></div>
<div class="a" style="left:129px;top:460px;width:1px;height:21px;background:#ffffff;"></div>
<svg class="a" style="left:132px;top:466px" width="13" height="10" viewBox="0 0 13 10" shape-rendering="crispEdges"><rect x="3" y="1" width="9" height="1" fill="#f8f8f8"/><rect x="2" y="2" width="10" height="1" fill="#f8f8f8"/><rect x="1" y="3" width="11" height="1" fill="#f8f8f8"/><rect x="1" y="4" width="11" height="1" fill="#f8f8f8"/><rect x="1" y="5" width="11" height="1" fill="#f8f8f8"/><rect x="1" y="6" width="11" height="1" fill="#f8f8f8"/><rect x="1" y="7" width="11" height="1" fill="#f8f8f8"/><rect x="1" y="8" width="11" height="1" fill="#f8f8f8"/><rect x="1" y="8" width="11" height="1" fill="#f0f0f0"/><rect x="6" y="2" width="1" height="1" fill="#9a9a9a"/><rect x="8" y="2" width="2" height="1" fill="#9a9a9a"/><rect x="2" y="4" width="2" height="1" fill="#9a9a9a"/><rect x="6" y="4" width="2" height="1" fill="#9a9a9a"/><rect x="9" y="4" width="2" height="1" fill="#9a9a9a"/><rect x="3" y="0" width="10" height="1" fill="#8a8a8a"/><rect x="2" y="1" width="1" height="1" fill="#8a8a8a"/><rect x="12" y="1" width="1" height="1" fill="#8a8a8a"/><rect x="1" y="2" width="1" height="1" fill="#8a8a8a"/><rect x="12" y="2" width="1" height="1" fill="#8a8a8a"/><rect x="0" y="3" width="1" height="1" fill="#8a8a8a"/><rect x="12" y="3" width="1" height="1" fill="#8a8a8a"/><rect x="0" y="4" width="1" height="1" fill="#8a8a8a"/><rect x="12" y="4" width="1" height="1" fill="#8a8a8a"/><rect x="0" y="5" width="1" height="1" fill="#8a8a8a"/><rect x="12" y="5" width="1" height="1" fill="#8a8a8a"/><rect x="0" y="6" width="1" height="1" fill="#8a8a8a"/><rect x="12" y="6" width="1" height="1" fill="#8a8a8a"/><rect x="0" y="7" width="1" height="1" fill="#8a8a8a"/><rect x="12" y="7" width="1" height="1" fill="#8a8a8a"/><rect x="0" y="8" width="1" height="1" fill="#8a8a8a"/><rect x="12" y="8" width="1" height="1" fill="#8a8a8a"/><rect x="0" y="9" width="13" height="1" fill="#8a8a8a"/><rect x="2" y="2" width="1" height="1" fill="#8a8a8a"/></svg>
<div class="a" style="left:158px;top:459px;width:22px;height:23px;background:#f0f0f0;border:1px solid #a0a0a0;box-sizing:border-box;"></div>
<div class="a" style="left:159px;top:460px;width:20px;height:1px;background:#ffffff;"></div>
<div class="a" style="left:159px;top:460px;width:1px;height:21px;background:#ffffff;"></div>
<svg class="a" style="left:163px;top:465px" width="13" height="13" viewBox="0 0 13 13" shape-rendering="crispEdges"><rect x="1" y="1" width="11" height="1" fill="#aab8e8"/><rect x="2" y="2" width="9" height="1" fill="#aab8e8"/><rect x="3" y="3" width="7" height="1" fill="#aab8e8"/><rect x="4" y="4" width="5" height="1" fill="#aab8e8"/><rect x="5" y="5" width="3" height="1" fill="#aab8e8"/><rect x="5" y="6" width="2" height="1" fill="#aab8e8"/><rect x="5" y="7" width="2" height="1" fill="#aab8e8"/><rect x="5" y="8" width="2" height="1" fill="#aab8e8"/><rect x="5" y="9" width="2" height="1" fill="#aab8e8"/><rect x="5" y="10" width="2" height="1" fill="#aab8e8"/><rect x="5" y="11" width="2" height="1" fill="#aab8e8"/><rect x="0" y="0" width="13" height="1" fill="#000"/><rect x="0" y="1" width="1" height="1" fill="#000"/><rect x="12" y="1" width="1" height="1" fill="#000"/><rect x="1" y="2" width="1" height="1" fill="#000"/><rect x="11" y="2" width="1" height="1" fill="#000"/><rect x="2" y="3" width="1" height="1" fill="#000"/><rect x="10" y="3" width="1" height="1" fill="#000"/><rect x="3" y="4" width="1" height="1" fill="#000"/><rect x="9" y="4" width="1" height="1" fill="#000"/><rect x="4" y="5" width="1" height="1" fill="#000"/><rect x="8" y="5" width="1" height="1" fill="#000"/><rect x="4" y="6" width="1" height="1" fill="#000"/><rect x="7" y="6" width="1" height="1" fill="#000"/><rect x="4" y="7" width="1" height="1" fill="#000"/><rect x="7" y="7" width="1" height="1" fill="#000"/><rect x="4" y="8" width="1" height="1" fill="#000"/><rect x="7" y="8" width="1" height="1" fill="#000"/><rect x="4" y="9" width="1" height="1" fill="#000"/><rect x="7" y="9" width="1" height="1" fill="#000"/><rect x="4" y="10" width="1" height="1" fill="#000"/><rect x="7" y="10" width="1" height="1" fill="#000"/><rect x="4" y="11" width="1" height="1" fill="#000"/><rect x="7" y="11" width="1" height="1" fill="#000"/><rect x="4" y="12" width="4" height="1" fill="#000"/></svg>
<div class="a" style="left:371px;top:462px;width:60px;height:17px;background:#ffffff;border:1px solid #a0a0a0;box-sizing:border-box;"></div>
<div class="t" style="top:463px;color:#a8a8a8;transform:scaleX(0.87);left:374px;font-style:italic">Find</div>
<div class="a" style="left:18px;top:485px;width:414px;height:108px;background:#ffffff;"></div>
<div class="a" style="left:18px;top:485px;width:414px;height:108px;border:1px solid #a0a0a0;box-sizing:border-box;"></div>
<div class="a" style="left:19px;top:486px;width:412px;height:16px;background:#f0f0f0;"></div>
<div class="a" style="left:19px;top:486px;width:412px;height:1px;background:#ffffff;"></div>
<div class="a" style="left:19px;top:502px;width:412px;height:1px;background:#a0a0a0;"></div>
<div class="a" style="left:40px;top:486px;width:1px;height:16px;background:#a0a0a0;"></div>
<div class="a" style="left:41px;top:486px;width:1px;height:16px;background:#ffffff;"></div>
<div class="a" style="left:163px;top:486px;width:1px;height:16px;background:#a0a0a0;"></div>
<div class="a" style="left:164px;top:486px;width:1px;height:16px;background:#ffffff;"></div>
<div class="a" style="left:253px;top:486px;width:1px;height:16px;background:#a0a0a0;"></div>
<div class="a" style="left:254px;top:486px;width:1px;height:16px;background:#ffffff;"></div>
<div class="a" style="left:343px;top:486px;width:1px;height:16px;background:#a0a0a0;"></div>
<div class="a" style="left:344px;top:486px;width:1px;height:16px;background:#ffffff;"></div>
<div class="a" style="left:416px;top:486px;width:1px;height:16px;background:#a0a0a0;"></div>
<div class="a" style="left:417px;top:486px;width:1px;height:16px;background:#ffffff;"></div>
<div class="t" style="top:488px;color:#000;transform:scaleX(0.87);left:43px;">Address</div>
<div class="t" style="top:488px;color:#000;transform:scaleX(0.87);left:166px;">Network</div>
<div class="t" style="top:488px;color:#000;transform:scaleX(0.87);left:256px;">Interface</div>
<svg class="a" style="left:152px;top:489px" width="9" height="8" viewBox="0 0 9 8" shape-rendering="crispEdges"><path d="M4.5 0.5 L8.5 7 H0.5" fill="none" stroke="#ffffff" stroke-width="1.2" shape-rendering="auto"/><path d="M4.5 0.5 L0.5 7" fill="none" stroke="#8c8c8c" stroke-width="1.2" shape-rendering="auto"/></svg>
<svg class="a" style="left:420px;top:492px" width="9" height="5" viewBox="0 0 9 5" shape-rendering="crispEdges"><path d="M0 0 H9 L4.5 5 Z" fill="#000"/></svg>
<div class="a" style="left:19px;top:517px;width:412px;height:1px;background:#e6e6e6;"></div>
<div class="a" style="left:19px;top:532px;width:412px;height:1px;background:#e6e6e6;"></div>
<div class="a" style="left:19px;top:547px;width:412px;height:1px;background:#e6e6e6;"></div>
<div class="a" style="left:40px;top:503px;width:1px;height:14px;background:#e6e6e6;"></div>
<div class="a" style="left:40px;top:533px;width:1px;height:14px;background:#e6e6e6;"></div>
<div class="a" style="left:163px;top:503px;width:1px;height:14px;background:#e6e6e6;"></div>
<div class="a" style="left:163px;top:533px;width:1px;height:14px;background:#e6e6e6;"></div>
<div class="a" style="left:253px;top:503px;width:1px;height:14px;background:#e6e6e6;"></div>
<div class="a" style="left:253px;top:533px;width:1px;height:14px;background:#e6e6e6;"></div>
<div class="a" style="left:343px;top:503px;width:1px;height:14px;background:#e6e6e6;"></div>
<div class="a" style="left:343px;top:533px;width:1px;height:14px;background:#e6e6e6;"></div>
<div class="t" style="top:503px;color:#000;transform:scaleX(0.87);left:21px;">D</div>
<svg class="a" style="left:43px;top:504px" width="12" height="12" viewBox="0 0 12 12" shape-rendering="crispEdges"><rect x="5" y="0" width="2" height="1" fill="#000"/><rect x="4" y="1" width="4" height="2" fill="#000"/><rect x="5" y="1" width="2" height="2" fill="#fff"/><rect x="0" y="3" width="12" height="4" fill="#000"/><rect x="1" y="4" width="10" height="2" fill="#ffff00"/><rect x="4" y="7" width="4" height="5" fill="#000"/><rect x="5" y="7" width="2" height="4" fill="#fff"/></svg>
<div class="a" style="left:86px;top:502px;width:34px;height:1px;background:#f4f4f4;"></div>
<div class="t" style="top:503px;color:#000;transform:scaleX(0.91);left:59px;">84.40</div>
<div class="t" style="top:503px;color:#000;transform:scaleX(0.9075);left:118px;">)/24</div>
<div class="t" style="top:503px;color:#000;transform:scaleX(0.9033333333333333);left:166px;">84.</div>
<div class="t" style="top:503px;color:#000;transform:scaleX(0.895);right:903px;transform-origin:100% 0;">.0</div>
<div class="t" style="top:503px;color:#000;transform:scaleX(0.8735714285714286);left:256px;">ether1-gateway</div>
<div class="t" style="top:518px;color:#000;transform:scaleX(0.87);left:34px;">;;; defconf</div>
<svg class="a" style="left:43px;top:534px" width="12" height="12" viewBox="0 0 12 12" shape-rendering="crispEdges"><rect x="5" y="0" width="2" height="1" fill="#000"/><rect x="4" y="1" width="4" height="2" fill="#000"/><rect x="5" y="1" width="2" height="2" fill="#fff"/><rect x="0" y="3" width="12" height="4" fill="#000"/><rect x="1" y="4" width="10" height="2" fill="#ffff00"/><rect x="4" y="7" width="4" height="5" fill="#000"/><rect x="5" y="7" width="2" height="4" fill="#fff"/></svg>
<div class="t" style="top:533px;color:#000;transform:scaleX(0.9092857142857143);left:59px;">192.168.0.1/24</div>
<div class="t" style="top:533px;color:#000;transform:scaleX(0.9063636363636364);left:166px;">192.168.0.0</div>
<div class="t" style="top:533px;color:#000;transform:scaleX(0.87);left:256px;">bridge</div>
<div class="t" style="top:595px;color:#000;transform:scaleX(0.8771428571428571);left:21px;">2 items</div>
<div class="a" style="left:18px;top:612px;width:414px;height:1px;background:#ffffff;"></div>
<div class="a" style="left:563px;top:22px;width:563px;height:766px;background:#f0f0f0;"></div>
<div class="a" style="left:563px;top:22px;width:563px;height:1px;background:#000000;"></div>
<div class="a" style="left:563px;top:22px;width:1px;height:766px;background:#000000;"></div>
<div class="a" style="left:564px;top:23px;width:562px;height:22px;background:#4f4fcf;"></div>
<div class="a" style="left:564px;top:23px;width:562px;height:1px;background:#7f7fe6;"></div>
<div class="t" style="top:29px;color:#ffffff;transform:scaleX(0.8720833333333333);left:569px;">Interface &lt;eoip-tunnel1&gt;</div>
<div class="a" style="left:566px;top:72px;width:500px;height:1px;background:#ffffff;"></div>
<div class="a" style="left:566px;top:72px;width:1px;height:716px;background:#ffffff;"></div>
<div class="a" style="left:1065px;top:72px;width:1px;height:716px;background:#a0a0a0;"></div>
<div class="a" style="left:621px;top:50px;width:74px;height:22px;background:#d9d9d9;"></div>
<div class="a" style="left:621px;top:50px;width:74px;height:1px;background:#f4f4f4;"></div>
<div class="a" style="left:621px;top:50px;width:1px;height:22px;background:#ececec;"></div>
<div class="a" style="left:694px;top:50px;width:1px;height:22px;background:#b9b9b9;"></div>
<div class="t" style="top:55px;color:#000;transform:scaleX(0.87);left:627px;">Loop Protect</div>
<div class="a" style="left:695px;top:50px;width:44px;height:22px;background:#d9d9d9;"></div>
<div class="a" style="left:695px;top:50px;width:44px;height:1px;background:#f4f4f4;"></div>
<div class="a" style="left:695px;top:50px;width:1px;height:22px;background:#ececec;"></div>
<div class="a" style="left:738px;top:50px;width:1px;height:22px;background:#b9b9b9;"></div>
<div class="t" style="top:55px;color:#000;transform:scaleX(0.87);left:701px;">Status</div>
<div class="a" style="left:739px;top:50px;width:44px;height:22px;background:#d9d9d9;"></div>
<div class="a" style="left:739px;top:50px;width:44px;height:1px;background:#f4f4f4;"></div>
<div class="a" style="left:739px;top:50px;width:1px;height:22px;background:#ececec;"></div>
<div class="a" style="left:782px;top:50px;width:1px;height:22px;background:#b9b9b9;"></div>
<div class="t" style="top:55px;color:#000;transform:scaleX(0.87);left:745px;">Traffic</div>
<div class="a" style="left:568px;top:47px;width:53px;height:26px;background:#f0f0f0;"></div>
<div class="a" style="left:568px;top:47px;width:53px;height:1px;background:#ffffff;"></div>
<div class="a" style="left:568px;top:47px;width:1px;height:26px;background:#ffffff;"></div>
<div class="a" style="left:620px;top:47px;width:1px;height:25px;background:#a0a0a0;"></div>
<div class="t" style="top:52px;color:#000;transform:scaleX(0.87);left:575px;">General</div>
<div class="a" style="left:659px;top:80px;width:399px;height:17px;background:#ffffff;border:1px solid #a0a0a0;box-sizing:border-box;"></div>
<div class="t" style="top:82px;color:#000;transform:scaleX(0.87);right:471px;transform-origin:100% 0;">Name:</div>
<div class="a" style="left:661px;top:82px;width:60px;height:13px;background:#3399ff;"></div>
<div class="t" style="top:82px;color:#ffffff;transform:scaleX(0.8741666666666666);left:662px;">eoip-tunnel1</div>
<div class="a" style="left:659px;top:103px;width:399px;height:17px;background:#f0f0f0;border:1px solid #a0a0a0;box-sizing:border-box;"></div>
<div class="t" style="top:105px;color:#000;transform:scaleX(0.87);right:471px;transform-origin:100% 0;">Type:</div>
<div class="t" style="top:105px;color:#000;transform:scaleX(0.87);left:662px;">EoIP Tunnel</div>
<div class="a" style="left:659px;top:126px;width:381px;height:17px;background:#ffffff;border:1px solid #a0a0a0;box-sizing:border-box;"></div>
<div class="t" style="top:128px;color:#000;transform:scaleX(0.87);right:471px;transform-origin:100% 0;">MTU:</div>
<div class="t" style="top:128px;color:#000;transform:scaleX(0.92);left:662px;">1500</div>
<svg class="a" style="left:1045px;top:132px" width="11" height="6" viewBox="0 0 11 6" shape-rendering="crispEdges"><path d="M0 6 L5.5 0 L11 6 Z" fill="#000"/></svg>
<div class="a" style="left:659px;top:149px;width:399px;height:17px;background:#f0f0f0;border:1px solid #a0a0a0;box-sizing:border-box;"></div>
<div class="t" style="top:151px;color:#000;transform:scaleX(0.87);right:471px;transform-origin:100% 0;">Actual MTU:</div>
<div class="t" style="top:151px;color:#000;transform:scaleX(0.92);left:662px;">1500</div>
<div class="a" style="left:659px;top:172px;width:399px;height:17px;background:#f0f0f0;border:1px solid #a0a0a0;box-sizing:border-box;"></div>
<div class="t" style="top:174px;color:#000;transform:scaleX(0.8771428571428571);right:471px;transform-origin:100% 0;">L2 MTU:</div>
<div class="t" style="top:174px;color:#000;transform:scaleX(0.92);left:662px;">65535</div>
<div class="a" style="left:659px;top:195px;width:399px;height:17px;background:#ffffff;border:1px solid #a0a0a0;box-sizing:border-box;"></div>
<div class="t" style="top:197px;color:#000;transform:scaleX(0.87);right:471px;transform-origin:100% 0;">MAC Address:</div>
<div class="t" style="top:197px;color:#000;transform:scaleX(0.8964705882352941);left:662px;">02:2A:3D:B2:03:47</div>
<div class="a" style="left:659px;top:218px;width:381px;height:17px;background:#ffffff;border:1px solid #a0a0a0;box-sizing:border-box;"></div>
<div class="t" style="top:220px;color:#000;transform:scaleX(0.87);right:471px;transform-origin:100% 0;">ARP:</div>
<div class="t" style="top:220px;color:#000;transform:scaleX(0.87);left:662px;">enabled</div>
<div class="a" style="left:1041px;top:218px;width:17px;height:17px;background:#ececec;border:1px solid #a0a0a0;box-sizing:border-box;"></div>
<div class="a" style="left:1042px;top:219px;width:15px;height:1px;background:#ffffff;"></div>
<div class="a" style="left:1042px;top:219px;width:1px;height:15px;background:#ffffff;"></div>
<svg class="a" style="left:1045px;top:223px" width="9" height="9" viewBox="0 0 9 9" shape-rendering="crispEdges"><rect x="1" y="0" width="7" height="1" fill="#000"/><path d="M3 2 H6 V4 H8.5 L4.5 8.5 L0.5 4 H3 Z" fill="#000"/></svg>
<div class="a" style="left:659px;top:241px;width:381px;height:17px;background:#f0f0f0;border:1px solid #a0a0a0;box-sizing:border-box;"></div>
<div class="t" style="top:243px;color:#000;transform:scaleX(0.87);right:471px;transform-origin:100% 0;">ARP Timeout:</div>
<svg class="a" style="left:1045px;top:247px" width="11" height="6" viewBox="0 0 11 6" shape-rendering="crispEdges"><path d="M0 0 L11 0 L5.5 6 Z" fill="#000"/></svg>
<div class="a" style="left:574px;top:265px;width:484px;height:1px;background:#a0a0a0;"></div>
<div class="a" style="left:574px;top:266px;width:484px;height:1px;background:#ffffff;"></div>
<div class="a" style="left:659px;top:272px;width:381px;height:17px;background:#ffffff;border:1px solid #a0a0a0;box-sizing:border-box;"></div>
<div class="t" style="top:274px;color:#000;transform:scaleX(0.87);right:471px;transform-origin:100% 0;">Local Address:</div>
<div class="t" style="top:274px;color:#000;transform:scaleX(0.9033333333333333);left:662px;">84.40.</div>
<svg class="a" style="left:1045px;top:278px" width="11" height="6" viewBox="0 0 11 6" shape-rendering="crispEdges"><path d="M0 6 L5.5 0 L11 6 Z" fill="#000"/></svg>
<div class="a" style="left:659px;top:295px;width:399px;height:17px;background:#ffffff;border:1px solid #a0a0a0;box-sizing:border-box;"></div>
<div class="t" style="top:297px;color:#000;transform:scaleX(0.87);right:471px;transform-origin:100% 0;">Remote Address:</div>
<div class="t" style="top:297px;color:#000;transform:scaleX(0.9033333333333333);left:662px;">46.10.</div>
<div class="a" style="left:659px;top:318px;width:399px;height:17px;background:#ffffff;border:1px solid #a0a0a0;box-sizing:border-box;"></div>
<div class="t" style="top:320px;color:#000;transform:scaleX(0.87);right:471px;transform-origin:100% 0;">Tunnel ID:</div>
<div class="t" style="top:320px;color:#000;transform:scaleX(0.92);left:662px;">7</div>
<div class="a" style="left:692px;top:269px;width:60px;height:49px;background:#ffffff;"></div>
<div class="a" style="left:574px;top:342px;width:484px;height:1px;background:#a0a0a0;"></div>
<div class="a" style="left:574px;top:343px;width:484px;height:1px;background:#ffffff;"></div>
<div class="a" style="left:659px;top:349px;width:381px;height:17px;background:#f0f0f0;border:1px solid #a0a0a0;box-sizing:border-box;"></div>
<div class="t" style="top:351px;color:#000;transform:scaleX(0.87);right:471px;transform-origin:100% 0;">IPsec Secret:</div>
<svg class="a" style="left:1045px;top:355px" width="11" height="6" viewBox="0 0 11 6" shape-rendering="crispEdges"><path d="M0 0 L11 0 L5.5 6 Z" fill="#000"/></svg>
<div class="a" style="left:574px;top:373px;width:484px;height:1px;background:#a0a0a0;"></div>
<div class="a" style="left:574px;top:374px;width:484px;height:1px;background:#ffffff;"></div>
<div class="a" style="left:659px;top:380px;width:186px;height:17px;background:#ffffff;border:1px solid #a0a0a0;box-sizing:border-box;"></div>
<div class="t" style="top:382px;color:#000;transform:scaleX(0.87);right:471px;transform-origin:100% 0;">Keepalive:</div>
<div class="t" style="top:382px;color:#000;transform:scaleX(0.9075);left:662px;">00:00:10</div>
<div class="t" style="top:382px;color:#000;transform:scaleX(0.87);left:849px;">.</div>
<div class="a" style="left:854px;top:380px;width:186px;height:17px;background:#ffffff;border:1px solid #a0a0a0;box-sizing:border-box;"></div>
<div class="t" style="top:382px;color:#000;transform:scaleX(0.92);left:857px;">10</div>
<svg class="a" style="left:1045px;top:385px" width="11" height="6" viewBox="0 0 11 6" shape-rendering="crispEdges"><path d="M0 6 L5.5 0 L11 6 Z" fill="#000"/></svg>
<div class="a" style="left:574px;top:404px;width:484px;height:1px;background:#a0a0a0;"></div>
<div class="a" style="left:574px;top:405px;width:484px;height:1px;background:#ffffff;"></div>
<div class="a" style="left:659px;top:411px;width:381px;height:17px;background:#ffffff;border:1px solid #a0a0a0;box-sizing:border-box;"></div>
<div class="t" style="top:413px;color:#000;transform:scaleX(0.87);right:471px;transform-origin:100% 0;">DSCP:</div>
<div class="t" style="top:413px;color:#000;transform:scaleX(0.87);left:662px;">inherit</div>
<div class="a" style="left:1041px;top:411px;width:17px;height:17px;background:#ececec;border:1px solid #a0a0a0;box-sizing:border-box;"></div>
<div class="a" style="left:1042px;top:412px;width:15px;height:1px;background:#ffffff;"></div>
<div class="a" style="left:1042px;top:412px;width:1px;height:15px;background:#ffffff;"></div>
<svg class="a" style="left:1045px;top:416px" width="9" height="9" viewBox="0 0 9 9" shape-rendering="crispEdges"><rect x="1" y="0" width="7" height="1" fill="#000"/><path d="M3 2 H6 V4 H8.5 L4.5 8.5 L0.5 4 H3 Z" fill="#000"/></svg>
<div class="a" style="left:659px;top:434px;width:381px;height:17px;background:#ffffff;border:1px solid #a0a0a0;box-sizing:border-box;"></div>
<div class="t" style="top:436px;color:#000;transform:scaleX(0.87);right:471px;transform-origin:100% 0;">Dont Fragment:</div>
<div class="t" style="top:436px;color:#000;transform:scaleX(0.87);left:662px;">no</div>
<div class="a" style="left:1041px;top:434px;width:17px;height:17px;background:#ececec;border:1px solid #a0a0a0;box-sizing:border-box;"></div>
<div class="a" style="left:1042px;top:435px;width:15px;height:1px;background:#ffffff;"></div>
<div class="a" style="left:1042px;top:435px;width:1px;height:15px;background:#ffffff;"></div>
<svg class="a" style="left:1045px;top:439px" width="9" height="9" viewBox="0 0 9 9" shape-rendering="crispEdges"><rect x="1" y="0" width="7" height="1" fill="#000"/><path d="M3 2 H6 V4 H8.5 L4.5 8.5 L0.5 4 H3 Z" fill="#000"/></svg>
<div class="a" style="left:659px;top:460px;width:13px;height:13px;background:#ffffff;border:1px solid #a0a0a0;box-sizing:border-box;"></div>
<svg class="a" style="left:661px;top:462px" width="9" height="8" viewBox="0 0 9 8" shape-rendering="crispEdges"><path d="M1 3.5 L3.5 6 L8 1.5" stroke="#000" stroke-width="2.2" fill="none"/></svg>
<div class="t" style="top:460px;color:#000;transform:scaleX(0.87);left:675px;">Clamp TCP MSS</div>
<div class="a" style="left:659px;top:483px;width:13px;height:13px;background:#ffffff;border:1px solid #a0a0a0;box-sizing:border-box;"></div>
<svg class="a" style="left:661px;top:485px" width="9" height="8" viewBox="0 0 9 8" shape-rendering="crispEdges"><path d="M1 3.5 L3.5 6 L8 1.5" stroke="#000" stroke-width="2.2" fill="none"/></svg>
<div class="t" style="top:483px;color:#000;transform:scaleX(0.87);left:675px;">Allow Fast Path</div>
<div class="a" style="left:1076px;top:51px;width:125px;height:23px;background:#f0f0f0;border:1px solid #000000;box-sizing:border-box;"></div>
<div class="a" style="left:1077px;top:52px;width:123px;height:21px;border:1px solid #000000;box-sizing:border-box;"></div>
<div class="a" style="left:1078px;top:53px;width:121px;height:1px;background:#ffffff;"></div>
<div class="a" style="left:1078px;top:53px;width:1px;height:19px;background:#ffffff;"></div>
<div class="t" style="left:1077px;width:80px;text-align:center;top:56px;transform:scaleX(0.87);transform-origin:50% 0">OK</div>
<div class="a" style="left:1076px;top:77px;width:125px;height:23px;background:#f0f0f0;border:1px solid #a0a0a0;box-sizing:border-box;"></div>
<div class="a" style="left:1077px;top:78px;width:123px;height:1px;background:#ffffff;"></div>
<div class="a" style="left:1077px;top:78px;width:1px;height:21px;background:#ffffff;"></div>
<div class="t" style="left:1077px;width:80px;text-align:center;top:82px;transform:scaleX(0.87);transform-origin:50% 0">Cancel</div>
<div class="a" style="left:1076px;top:103px;width:125px;height:23px;background:#f0f0f0;border:1px solid #a0a0a0;box-sizing:border-box;"></div>
<div class="a" style="left:1077px;top:104px;width:123px;height:1px;background:#ffffff;"></div>
<div class="a" style="left:1077px;top:104px;width:1px;height:21px;background:#ffffff;"></div>
<div class="t" style="left:1077px;width:80px;text-align:center;top:108px;transform:scaleX(0.87);transform-origin:50% 0">Apply</div>
<div class="a" style="left:1076px;top:134px;width:125px;height:23px;background:#f0f0f0;border:1px solid #a0a0a0;box-sizing:border-box;"></div>
<div class="a" style="left:1077px;top:135px;width:123px;height:1px;background:#ffffff;"></div>
<div class="a" style="left:1077px;top:135px;width:1px;height:21px;background:#ffffff;"></div>
<div class="t" style="left:1077px;width:80px;text-align:center;top:139px;transform:scaleX(0.87);transform-origin:50% 0">Disable</div>
<div class="a" style="left:1076px;top:160px;width:125px;height:23px;background:#f0f0f0;border:1px solid #a0a0a0;box-sizing:border-box;"></div>
<div class="a" style="left:1077px;top:161px;width:123px;height:1px;background:#ffffff;"></div>
<div class="a" style="left:1077px;top:161px;width:1px;height:21px;background:#ffffff;"></div>
<div class="t" style="left:1077px;width:80px;text-align:center;top:165px;transform:scaleX(0.87);transform-origin:50% 0">Comment</div>
<div class="a" style="left:1076px;top:186px;width:125px;height:23px;background:#f0f0f0;border:1px solid #a0a0a0;box-sizing:border-box;"></div>
<div class="a" style="left:1077px;top:187px;width:123px;height:1px;background:#ffffff;"></div>
<div class="a" style="left:1077px;top:187px;width:1px;height:21px;background:#ffffff;"></div>
<div class="t" style="left:1077px;width:80px;text-align:center;top:191px;transform:scaleX(0.87);transform-origin:50% 0">Copy</div>
<div class="a" style="left:1076px;top:212px;width:125px;height:23px;background:#f0f0f0;border:1px solid #a0a0a0;box-sizing:border-box;"></div>
<div class="a" style="left:1077px;top:213px;width:123px;height:1px;background:#ffffff;"></div>
<div class="a" style="left:1077px;top:213px;width:1px;height:21px;background:#ffffff;"></div>
<div class="t" style="left:1077px;width:80px;text-align:center;top:217px;transform:scaleX(0.87);transform-origin:50% 0">Remove</div>
<div class="a" style="left:1076px;top:238px;width:125px;height:23px;background:#f0f0f0;border:1px solid #a0a0a0;box-sizing:border-box;"></div>
<div class="a" style="left:1077px;top:239px;width:123px;height:1px;background:#ffffff;"></div>
<div class="a" style="left:1077px;top:239px;width:1px;height:21px;background:#ffffff;"></div>
<div class="t" style="left:1077px;width:80px;text-align:center;top:243px;transform:scaleX(0.87);transform-origin:50% 0">Torch</div>
</body></html>
